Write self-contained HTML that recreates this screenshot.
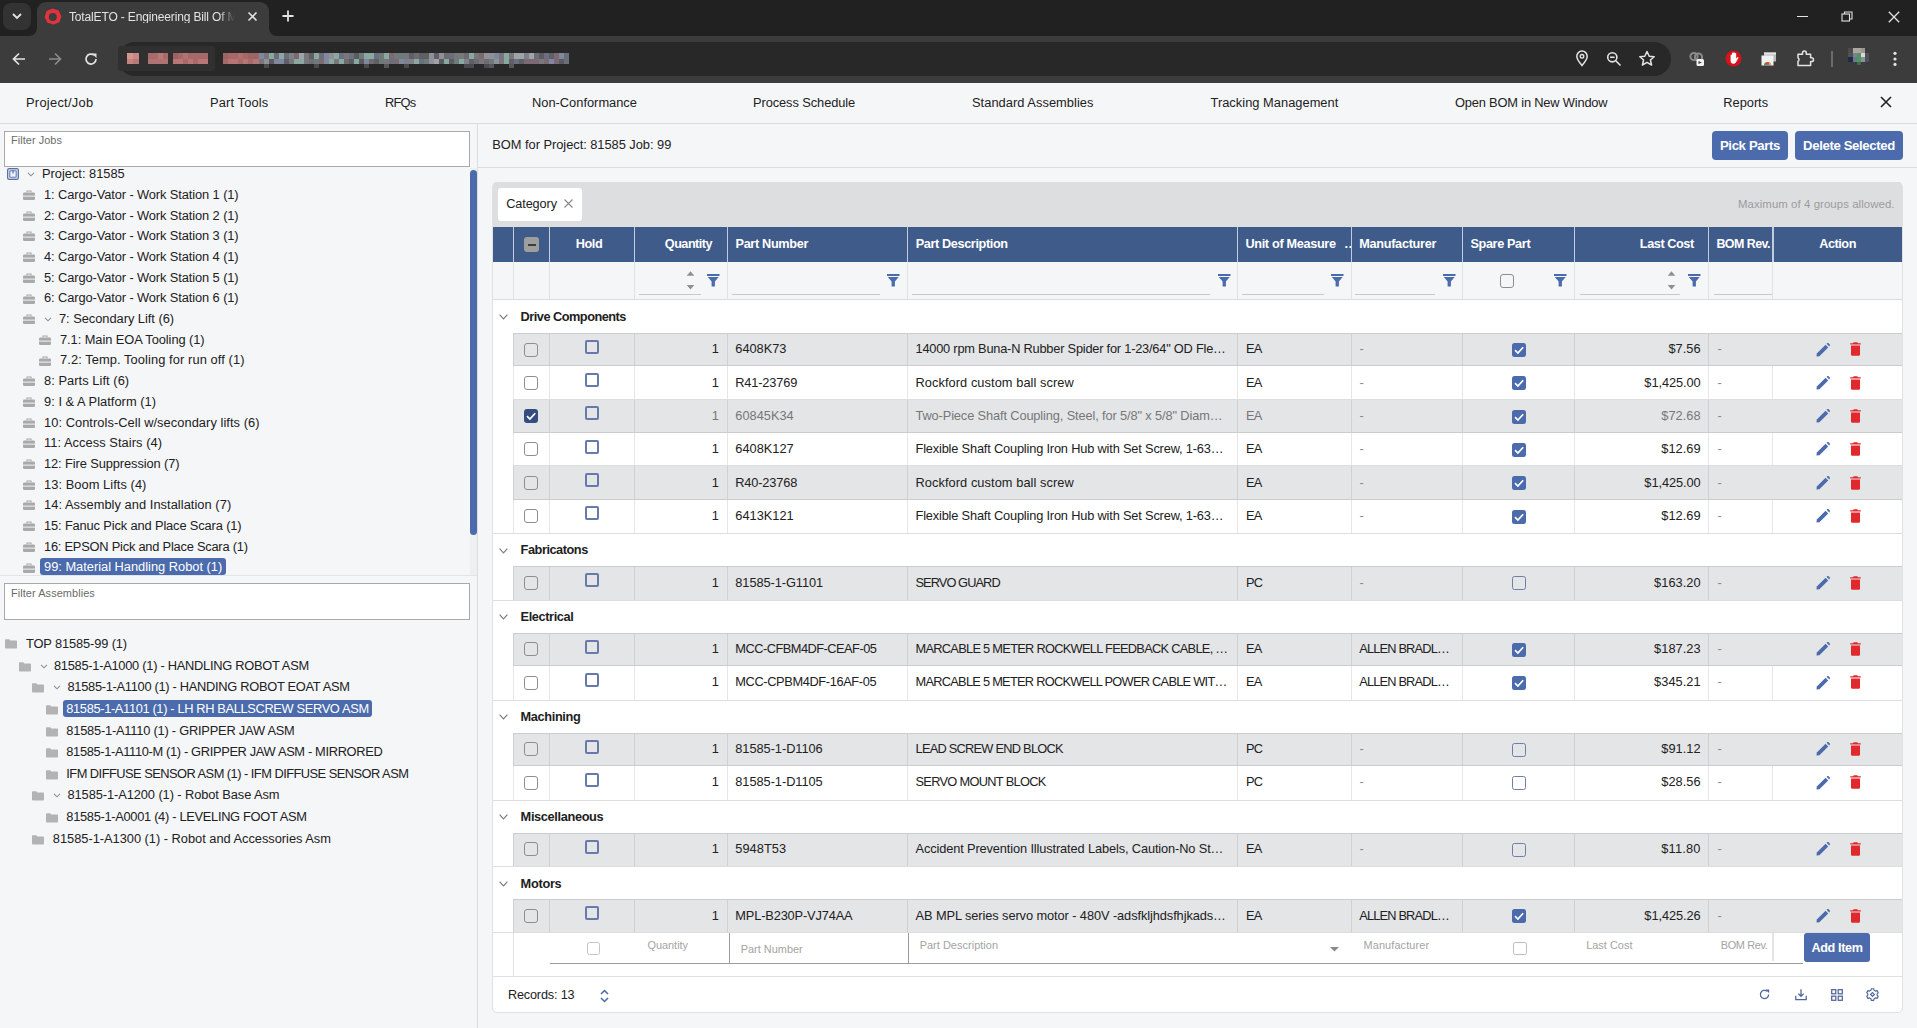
<!DOCTYPE html>
<html><head><meta charset="utf-8"><title>TotalETO</title>
<style>
*{box-sizing:border-box;margin:0;padding:0}
html,body{width:1917px;height:1028px;overflow:hidden}
body{background:#f5f6f8;font-family:"Liberation Sans",sans-serif;position:relative;color:#212121}
.a{position:absolute}
.t{position:absolute;white-space:nowrap;line-height:1}
/* chrome */
#strip{left:0;top:0;width:1917px;height:36px;background:#202120}
#toolbar{left:0;top:36px;width:1917px;height:47px;background:#3c3c3c}
#tab{left:37px;top:2px;width:232px;height:40px;background:#3c3c3c;border-radius:9px 9px 0 0}
#omni{left:118px;top:42px;width:1553px;height:34px;background:#282828;border-radius:17px}
/* nav */
#nav{left:0;top:83px;width:1917px;height:41px;background:#f5f6f8;border-bottom:1px solid #d9dadd}
.nv{font-size:13.5px;color:#212121;top:96px}
/* left */
#vdiv{left:477px;top:123px;width:1px;height:905px;background:#e0e1e4}
.inp{background:#fff;border:1px solid #a9a9a9}
.ph{font-size:11px;color:#6b6b6b}
.tr{font-size:13px;color:#212121}
.bag{width:13px;height:11px}
.fold{width:13px;height:11px}
/* right */
.btn{background:#4a6cb0;color:#fff;font-weight:bold;font-size:13px;border-radius:3px}
</style></head><body>
<!-- ===== BROWSER CHROME ===== -->
<div id="strip" class="a"></div>
<div id="toolbar" class="a"></div>
<div class="a" style="left:3px;top:3px;width:28px;height:27px;background:#333;border-radius:8px"></div>
<svg class="a" style="left:10px;top:10px" width="14" height="12" viewBox="0 0 14 12"><path d="M3 4 L7 8 L11 4" stroke="#e3e3e3" stroke-width="1.8" fill="none"/></svg>
<div id="tab" class="a"></div>
<svg class="a" style="left:29px;top:28px" width="8" height="8"><path d="M8 0 V8 H0 A8 8 0 0 0 8 0Z" fill="#3c3c3c"/></svg>
<svg class="a" style="left:269px;top:28px" width="8" height="8"><path d="M0 0 V8 H8 A8 8 0 0 1 0 0Z" fill="#3c3c3c"/></svg>
<svg class="a" style="left:44px;top:7.5px" width="18" height="17" viewBox="0 0 18 17"><path fill-rule="evenodd" fill="#e0333d" d="M8.6 0.6 L14.6 2.6 L17.4 8.2 L15.4 14.2 L9.6 16.6 L3.4 14.8 L0.6 9 L2.6 3 Z M8.8 5 A4 4 0 1 0 8.8 13 A4 4 0 1 0 8.8 5 Z"/></svg>
<div class="t" style="left:69px;top:11px;font-size:12px;letter-spacing:-0.15px;color:#e3e3e3;width:166px;overflow:hidden;-webkit-mask-image:linear-gradient(90deg,#000 150px,transparent 166px)">TotalETO - Engineering Bill Of Materials</div>
<svg class="a" style="left:247px;top:11px" width="11" height="11" viewBox="0 0 11 11"><path d="M1.5 1.5 L9.5 9.5 M9.5 1.5 L1.5 9.5" stroke="#e3e3e3" stroke-width="1.6"/></svg>
<svg class="a" style="left:282px;top:10px" width="12" height="12" viewBox="0 0 12 12"><path d="M6 0.5 V11.5 M0.5 6 H11.5" stroke="#e3e3e3" stroke-width="1.8"/></svg>
<!-- window controls -->
<div class="a" style="left:1797px;top:16px;width:11px;height:1px;background:#e3e3e3"></div>
<svg class="a" style="left:1841px;top:11px" width="13" height="11" viewBox="0 0 13 11"><rect x="1" y="3" width="7.5" height="7" fill="none" stroke="#e3e3e3" stroke-width="1.1"/><path d="M3.5 3 V1 H11 V8 H8.5" fill="none" stroke="#e3e3e3" stroke-width="1.1"/></svg>
<svg class="a" style="left:1888px;top:11px" width="12" height="12" viewBox="0 0 12 12"><path d="M0.8 0.8 L11.2 11.2 M11.2 0.8 L0.8 11.2" stroke="#e3e3e3" stroke-width="1.3"/></svg>
<!-- nav buttons -->
<svg class="a" style="left:12px;top:52px" width="14" height="14" viewBox="0 0 14 14"><path d="M13 7 H2 M7 1.5 L1.5 7 L7 12.5" stroke="#e3e3e3" stroke-width="1.7" fill="none"/></svg>
<svg class="a" style="left:48px;top:52px" width="14" height="14" viewBox="0 0 14 14"><path d="M1 7 H12 M7 1.5 L12.5 7 L7 12.5" stroke="#8a8a8a" stroke-width="1.7" fill="none"/></svg>
<svg class="a" style="left:84px;top:52px" width="14" height="14" viewBox="0 0 14 14"><path d="M12 7 A5 5 0 1 1 10.2 3.2" stroke="#e3e3e3" stroke-width="1.7" fill="none"/><path d="M8 1.5 H12.5 V6 Z" fill="#e3e3e3"/></svg>
<div id="omni" class="a"></div>
<div class="a" style="left:0;top:0;width:1917px;height:83px;filter:blur(0.5px)"><div class="a" style="left:118px;top:46px;width:97px;height:25px;background:#303030;border-radius:3px"></div><div class="a" style="left:127px;top:53px;width:6px;height:6px;background:#d29590"></div><div class="a" style="left:127px;top:59px;width:6px;height:5px;background:#c4837f"></div><div class="a" style="left:133px;top:53px;width:6px;height:6px;background:#c98a86"></div><div class="a" style="left:133px;top:59px;width:6px;height:5px;background:#b9787a"></div><div class="a" style="left:148px;top:53px;width:5px;height:6px;background:#a86a6a"></div><div class="a" style="left:148px;top:59px;width:5px;height:5px;background:#b07272"></div><div class="a" style="left:153px;top:53px;width:5px;height:6px;background:#a86a6a"></div><div class="a" style="left:153px;top:59px;width:5px;height:5px;background:#b07272"></div><div class="a" style="left:158px;top:53px;width:5px;height:6px;background:#b97a76"></div><div class="a" style="left:158px;top:59px;width:5px;height:5px;background:#b07272"></div><div class="a" style="left:163px;top:53px;width:5px;height:6px;background:#a86a6a"></div><div class="a" style="left:163px;top:59px;width:5px;height:5px;background:#b07272"></div><div class="a" style="left:173px;top:53px;width:5px;height:6px;background:#9a6262"></div><div class="a" style="left:173px;top:59px;width:5px;height:5px;background:#b87676"></div><div class="a" style="left:178px;top:53px;width:5px;height:6px;background:#a86868"></div><div class="a" style="left:178px;top:59px;width:5px;height:5px;background:#b87676"></div><div class="a" style="left:183px;top:53px;width:5px;height:6px;background:#b37272"></div><div class="a" style="left:183px;top:59px;width:5px;height:5px;background:#a66a6a"></div><div class="a" style="left:188px;top:53px;width:5px;height:6px;background:#a86868"></div><div class="a" style="left:188px;top:59px;width:5px;height:5px;background:#b87676"></div><div class="a" style="left:193px;top:53px;width:5px;height:6px;background:#a86868"></div><div class="a" style="left:193px;top:59px;width:5px;height:5px;background:#a66a6a"></div><div class="a" style="left:198px;top:53px;width:5px;height:6px;background:#a86868"></div><div class="a" style="left:198px;top:59px;width:5px;height:5px;background:#b87676"></div><div class="a" style="left:203px;top:53px;width:5px;height:6px;background:#a86868"></div><div class="a" style="left:203px;top:59px;width:5px;height:5px;background:#b87676"></div><div class="a" style="left:223px;top:53px;width:5px;height:6px;background:#9c6464"></div><div class="a" style="left:223px;top:59px;width:5px;height:5px;background:#a56a6a"></div><div class="a" style="left:228px;top:53px;width:5px;height:6px;background:#a86868"></div><div class="a" style="left:228px;top:59px;width:5px;height:5px;background:#b77474"></div><div class="a" style="left:233px;top:53px;width:5px;height:6px;background:#a86868"></div><div class="a" style="left:233px;top:59px;width:5px;height:5px;background:#b77474"></div><div class="a" style="left:238px;top:53px;width:5px;height:6px;background:#b07070"></div><div class="a" style="left:238px;top:59px;width:5px;height:5px;background:#a56a6a"></div><div class="a" style="left:243px;top:53px;width:5px;height:6px;background:#a86868"></div><div class="a" style="left:243px;top:59px;width:5px;height:5px;background:#b77474"></div><div class="a" style="left:248px;top:53px;width:5px;height:6px;background:#9c6464"></div><div class="a" style="left:248px;top:59px;width:5px;height:5px;background:#a56a6a"></div><div class="a" style="left:253px;top:53px;width:5px;height:6px;background:#9c6464"></div><div class="a" style="left:253px;top:59px;width:5px;height:5px;background:#b77474"></div><div class="a" style="left:258px;top:53px;width:5px;height:6px;background:#a86868"></div><div class="a" style="left:258px;top:59px;width:5px;height:5px;background:#b77474"></div><div class="a" style="left:259px;top:53px;width:5px;height:6px;background:#8088a0"></div><div class="a" style="left:259px;top:59px;width:5px;height:5px;background:#77777c"></div><div class="a" style="left:264px;top:53px;width:5px;height:6px;background:#77777c"></div><div class="a" style="left:264px;top:59px;width:5px;height:5px;background:#909098"></div><div class="a" style="left:264px;top:64px;width:5px;height:4px;background:#4a4a4e"></div><div class="a" style="left:269px;top:53px;width:5px;height:6px;background:#8aa8a0"></div><div class="a" style="left:269px;top:59px;width:5px;height:5px;background:#5a5c62"></div><div class="a" style="left:274px;top:53px;width:5px;height:6px;background:#6c6f7a"></div><div class="a" style="left:274px;top:59px;width:5px;height:5px;background:#8088a0"></div><div class="a" style="left:279px;top:53px;width:5px;height:6px;background:#8aa8a0"></div><div class="a" style="left:279px;top:59px;width:5px;height:5px;background:#8088a0"></div><div class="a" style="left:284px;top:53px;width:5px;height:6px;background:#6c6f7a"></div><div class="a" style="left:284px;top:59px;width:5px;height:5px;background:#5f6066"></div><div class="a" style="left:289px;top:53px;width:5px;height:6px;background:#80808a"></div><div class="a" style="left:289px;top:59px;width:5px;height:5px;background:#77777c"></div><div class="a" style="left:294px;top:53px;width:5px;height:6px;background:#7c6a72"></div><div class="a" style="left:294px;top:59px;width:5px;height:5px;background:#8aa8a0"></div><div class="a" style="left:299px;top:53px;width:5px;height:6px;background:#a0a4a8"></div><div class="a" style="left:299px;top:59px;width:5px;height:5px;background:#8aa8a0"></div><div class="a" style="left:304px;top:53px;width:5px;height:6px;background:#77777c"></div><div class="a" style="left:304px;top:59px;width:5px;height:5px;background:#77777c"></div><div class="a" style="left:309px;top:53px;width:5px;height:6px;background:#5f6066"></div><div class="a" style="left:309px;top:59px;width:5px;height:5px;background:#6c6f7a"></div><div class="a" style="left:314px;top:53px;width:5px;height:6px;background:#8aa8a0"></div><div class="a" style="left:314px;top:59px;width:5px;height:5px;background:#707a78"></div><div class="a" style="left:314px;top:64px;width:5px;height:4px;background:#4a4a4e"></div><div class="a" style="left:319px;top:53px;width:5px;height:6px;background:#6c6f7a"></div><div class="a" style="left:319px;top:59px;width:5px;height:5px;background:#7c6a72"></div><div class="a" style="left:324px;top:53px;width:5px;height:6px;background:#8088a0"></div><div class="a" style="left:324px;top:59px;width:5px;height:5px;background:#8088a0"></div><div class="a" style="left:329px;top:53px;width:5px;height:6px;background:#909098"></div><div class="a" style="left:329px;top:59px;width:5px;height:5px;background:#8aa8a0"></div><div class="a" style="left:334px;top:53px;width:5px;height:6px;background:#8aa8a0"></div><div class="a" style="left:334px;top:59px;width:5px;height:5px;background:#77777c"></div><div class="a" style="left:339px;top:53px;width:5px;height:6px;background:#6a7080"></div><div class="a" style="left:339px;top:59px;width:5px;height:5px;background:#8aa8a0"></div><div class="a" style="left:344px;top:53px;width:5px;height:6px;background:#77777c"></div><div class="a" style="left:344px;top:59px;width:5px;height:5px;background:#6b6b70"></div><div class="a" style="left:349px;top:53px;width:5px;height:6px;background:#6a7080"></div><div class="a" style="left:349px;top:59px;width:5px;height:5px;background:#5a5c62"></div><div class="a" style="left:354px;top:53px;width:5px;height:6px;background:#5a5c62"></div><div class="a" style="left:354px;top:59px;width:5px;height:5px;background:#8aa8a0"></div><div class="a" style="left:359px;top:53px;width:5px;height:6px;background:#707a78"></div><div class="a" style="left:359px;top:59px;width:5px;height:5px;background:#5a5c62"></div><div class="a" style="left:364px;top:53px;width:5px;height:6px;background:#8aa8a0"></div><div class="a" style="left:364px;top:59px;width:5px;height:5px;background:#8088a0"></div><div class="a" style="left:364px;top:64px;width:5px;height:4px;background:#4a4a4e"></div><div class="a" style="left:369px;top:53px;width:5px;height:6px;background:#8aa8a0"></div><div class="a" style="left:369px;top:59px;width:5px;height:5px;background:#6b6b70"></div><div class="a" style="left:374px;top:53px;width:5px;height:6px;background:#6a7080"></div><div class="a" style="left:374px;top:59px;width:5px;height:5px;background:#5f6066"></div><div class="a" style="left:379px;top:53px;width:5px;height:6px;background:#707a78"></div><div class="a" style="left:379px;top:59px;width:5px;height:5px;background:#707a78"></div><div class="a" style="left:384px;top:53px;width:5px;height:6px;background:#8aa8a0"></div><div class="a" style="left:384px;top:59px;width:5px;height:5px;background:#77777c"></div><div class="a" style="left:384px;top:64px;width:5px;height:4px;background:#55555a"></div><div class="a" style="left:389px;top:53px;width:5px;height:6px;background:#7c6a72"></div><div class="a" style="left:389px;top:59px;width:5px;height:5px;background:#6a7080"></div><div class="a" style="left:394px;top:53px;width:5px;height:6px;background:#707a78"></div><div class="a" style="left:394px;top:59px;width:5px;height:5px;background:#7c6a72"></div><div class="a" style="left:399px;top:53px;width:5px;height:6px;background:#707a78"></div><div class="a" style="left:399px;top:59px;width:5px;height:5px;background:#8088a0"></div><div class="a" style="left:404px;top:53px;width:5px;height:6px;background:#707a78"></div><div class="a" style="left:404px;top:59px;width:5px;height:5px;background:#80808a"></div><div class="a" style="left:404px;top:64px;width:5px;height:4px;background:#4a4a4e"></div><div class="a" style="left:409px;top:53px;width:5px;height:6px;background:#5f6066"></div><div class="a" style="left:409px;top:59px;width:5px;height:5px;background:#80808a"></div><div class="a" style="left:414px;top:53px;width:5px;height:6px;background:#6b6b70"></div><div class="a" style="left:414px;top:59px;width:5px;height:5px;background:#8aa8a0"></div><div class="a" style="left:419px;top:53px;width:5px;height:6px;background:#5f6066"></div><div class="a" style="left:419px;top:59px;width:5px;height:5px;background:#6a7080"></div><div class="a" style="left:424px;top:53px;width:5px;height:6px;background:#5f6066"></div><div class="a" style="left:424px;top:59px;width:5px;height:5px;background:#707a78"></div><div class="a" style="left:429px;top:53px;width:5px;height:6px;background:#909098"></div><div class="a" style="left:429px;top:59px;width:5px;height:5px;background:#909098"></div><div class="a" style="left:434px;top:53px;width:5px;height:6px;background:#5f6066"></div><div class="a" style="left:434px;top:59px;width:5px;height:5px;background:#a0a4a8"></div><div class="a" style="left:439px;top:53px;width:5px;height:6px;background:#909098"></div><div class="a" style="left:439px;top:59px;width:5px;height:5px;background:#5a5c62"></div><div class="a" style="left:444px;top:53px;width:5px;height:6px;background:#6b6b70"></div><div class="a" style="left:444px;top:59px;width:5px;height:5px;background:#8aa8a0"></div><div class="a" style="left:449px;top:53px;width:5px;height:6px;background:#6c6f7a"></div><div class="a" style="left:449px;top:59px;width:5px;height:5px;background:#5a5c62"></div><div class="a" style="left:454px;top:53px;width:5px;height:6px;background:#707a78"></div><div class="a" style="left:454px;top:59px;width:5px;height:5px;background:#707a78"></div><div class="a" style="left:459px;top:53px;width:5px;height:6px;background:#77777c"></div><div class="a" style="left:459px;top:59px;width:5px;height:5px;background:#8aa8a0"></div><div class="a" style="left:464px;top:53px;width:5px;height:6px;background:#6b6b70"></div><div class="a" style="left:464px;top:59px;width:5px;height:5px;background:#80808a"></div><div class="a" style="left:464px;top:64px;width:5px;height:4px;background:#4a4a4e"></div><div class="a" style="left:469px;top:53px;width:5px;height:6px;background:#8aa8a0"></div><div class="a" style="left:469px;top:59px;width:5px;height:5px;background:#5f6066"></div><div class="a" style="left:469px;top:64px;width:5px;height:4px;background:#4a4a4e"></div><div class="a" style="left:474px;top:53px;width:5px;height:6px;background:#77777c"></div><div class="a" style="left:474px;top:59px;width:5px;height:5px;background:#6b6b70"></div><div class="a" style="left:479px;top:53px;width:5px;height:6px;background:#7c6a72"></div><div class="a" style="left:479px;top:59px;width:5px;height:5px;background:#77777c"></div><div class="a" style="left:484px;top:53px;width:5px;height:6px;background:#909098"></div><div class="a" style="left:484px;top:59px;width:5px;height:5px;background:#6b6b70"></div><div class="a" style="left:484px;top:64px;width:5px;height:4px;background:#4a4a4e"></div><div class="a" style="left:489px;top:53px;width:5px;height:6px;background:#909098"></div><div class="a" style="left:489px;top:59px;width:5px;height:5px;background:#707a78"></div><div class="a" style="left:489px;top:64px;width:5px;height:4px;background:#55555a"></div><div class="a" style="left:494px;top:53px;width:5px;height:6px;background:#8088a0"></div><div class="a" style="left:494px;top:59px;width:5px;height:5px;background:#909098"></div><div class="a" style="left:499px;top:53px;width:5px;height:6px;background:#77777c"></div><div class="a" style="left:499px;top:59px;width:5px;height:5px;background:#77777c"></div><div class="a" style="left:504px;top:53px;width:5px;height:6px;background:#8aa8a0"></div><div class="a" style="left:504px;top:59px;width:5px;height:5px;background:#8aa8a0"></div><div class="a" style="left:509px;top:53px;width:5px;height:6px;background:#77777c"></div><div class="a" style="left:509px;top:59px;width:5px;height:5px;background:#5f6066"></div><div class="a" style="left:509px;top:64px;width:5px;height:4px;background:#55555a"></div><div class="a" style="left:514px;top:53px;width:5px;height:6px;background:#a0a4a8"></div><div class="a" style="left:514px;top:59px;width:5px;height:5px;background:#6a7080"></div><div class="a" style="left:519px;top:53px;width:5px;height:6px;background:#a0a4a8"></div><div class="a" style="left:519px;top:59px;width:5px;height:5px;background:#5f6066"></div><div class="a" style="left:524px;top:53px;width:5px;height:6px;background:#80808a"></div><div class="a" style="left:524px;top:59px;width:5px;height:5px;background:#7c6a72"></div><div class="a" style="left:529px;top:53px;width:5px;height:6px;background:#a0a4a8"></div><div class="a" style="left:529px;top:59px;width:5px;height:5px;background:#7c6a72"></div><div class="a" style="left:534px;top:53px;width:5px;height:6px;background:#6c6f7a"></div><div class="a" style="left:534px;top:59px;width:5px;height:5px;background:#7c6a72"></div><div class="a" style="left:539px;top:53px;width:5px;height:6px;background:#5a5c62"></div><div class="a" style="left:539px;top:59px;width:5px;height:5px;background:#77777c"></div><div class="a" style="left:544px;top:53px;width:5px;height:6px;background:#6a7080"></div><div class="a" style="left:544px;top:59px;width:5px;height:5px;background:#7c6a72"></div><div class="a" style="left:549px;top:53px;width:5px;height:6px;background:#5f6066"></div><div class="a" style="left:549px;top:59px;width:5px;height:5px;background:#8088a0"></div><div class="a" style="left:554px;top:53px;width:5px;height:6px;background:#7c6a72"></div><div class="a" style="left:554px;top:59px;width:5px;height:5px;background:#7c6a72"></div><div class="a" style="left:559px;top:53px;width:5px;height:6px;background:#8088a0"></div><div class="a" style="left:559px;top:59px;width:5px;height:5px;background:#5a5c62"></div><div class="a" style="left:564px;top:53px;width:5px;height:6px;background:#6c6f7a"></div><div class="a" style="left:564px;top:59px;width:5px;height:5px;background:#6c6f7a"></div></div>
<!-- omnibox right icons -->
<svg class="a" style="left:1575px;top:50px" width="14" height="17" viewBox="0 0 14 17"><path d="M7 15.5 C3 11 1.8 8.5 1.8 6.3 A5.2 5.2 0 0 1 12.2 6.3 C12.2 8.5 11 11 7 15.5Z" fill="none" stroke="#e3e3e3" stroke-width="1.5"/><circle cx="7" cy="6.3" r="1.8" fill="none" stroke="#e3e3e3" stroke-width="1.4"/></svg>
<svg class="a" style="left:1606px;top:51px" width="16" height="16" viewBox="0 0 16 16"><circle cx="6.3" cy="6.3" r="4.6" fill="none" stroke="#e3e3e3" stroke-width="1.6"/><path d="M4 6.3 H8.6 M9.8 9.8 L14.5 14.5" stroke="#e3e3e3" stroke-width="1.6"/></svg>
<svg class="a" style="left:1638px;top:50px" width="18" height="17" viewBox="0 0 18 17"><path d="M9 1.5 L11.2 6.2 L16.2 6.7 L12.4 10 L13.6 15 L9 12.4 L4.4 15 L5.6 10 L1.8 6.7 L6.8 6.2 Z" fill="none" stroke="#e3e3e3" stroke-width="1.5" stroke-linejoin="round"/></svg>
<!-- extensions -->
<svg class="a" style="left:1689px;top:50px" width="17" height="17" viewBox="0 0 17 17"><circle cx="5" cy="6.5" r="3.6" fill="none" stroke="#8c8c8c" stroke-width="2"/><circle cx="9.5" cy="7" r="3.6" fill="none" stroke="#8c8c8c" stroke-width="2"/><rect x="7.5" y="9" width="7.5" height="7" rx="1.5" fill="#f2f2f2"/><path d="M9.5 11 L12.8 12.5 L9.5 14 Z" fill="#3c3c3c"/></svg>
<svg class="a" style="left:1725px;top:50px" width="17" height="17" viewBox="0 0 17 17"><circle cx="8.5" cy="8.5" r="8" fill="#d4131c"/><path d="M5.6 9.5 V5.2 Q5.6 4.4 6.3 4.4 Q7 4.4 7 5.2 V3.4 Q7 2.6 7.7 2.6 Q8.4 2.6 8.4 3.4 V3 Q8.4 2.2 9.1 2.2 Q9.8 2.2 9.8 3 V3.8 Q9.8 3 10.5 3 Q11.2 3 11.2 3.8 V8.6 L12.2 7.4 Q12.8 6.8 13.3 7.3 Q13.7 7.8 13.2 8.5 L10.8 12.4 Q10 13.8 8.4 13.8 Q5.6 13.8 5.6 10.8 Z" fill="#fff"/></svg>
<svg class="a" style="left:1761px;top:52px" width="16" height="14" viewBox="0 0 16 14"><rect x="3" y="0.5" width="12" height="9" fill="#b8b8b8"/><rect x="3" y="0.5" width="12" height="2" fill="#e6e6e6"/><rect x="0.5" y="3.5" width="12" height="10" fill="#f0f0f0"/><path d="M3 13.5 A3.6 3.6 0 0 1 10.2 13.5 Z" fill="#d94336"/><path d="M4.8 13.5 A1.8 1.8 0 0 1 8.4 13.5 Z" fill="#4a88e0"/><path d="M3 13.5 A3.6 3.6 0 0 1 4.6 10.6 L5.6 12.3 Z" fill="#3ba35a"/><path d="M10.2 13.5 A3.6 3.6 0 0 0 8.6 10.6 L7.6 12.3 Z" fill="#f2c01e"/></svg>
<svg class="a" style="left:1797px;top:50px" width="18" height="17" viewBox="0 0 18 17"><path d="M1 4.3 H5.5 V3 A1.9 1.9 0 0 1 9.3 3 V4.3 H13.6 V7.8 H14.6 A1.9 1.9 0 0 1 14.6 11.6 H13.6 V15.6 H1 V11.3 A2 2 0 0 0 1 7.8 Z" fill="none" stroke="#e3e3e3" stroke-width="1.5" stroke-linejoin="round"/></svg>
<div class="a" style="left:1831px;top:51px;width:1.5px;height:16px;background:#6b6b6b"></div>
<div class="a" style="left:1848px;top:48px;width:21px;height:17px;filter:blur(0.35px)">
 <div class="a" style="left:0;top:0;width:5px;height:5px;background:#4c4c4e"></div>
 <div class="a" style="left:5px;top:0;width:4px;height:5px;background:#aba89f"></div>
 <div class="a" style="left:9px;top:0;width:4px;height:5px;background:#a9a69e"></div>
 <div class="a" style="left:13px;top:0;width:4px;height:5px;background:#9a9890"></div>
 <div class="a" style="left:0;top:5px;width:5px;height:4px;background:#4e525a"></div>
 <div class="a" style="left:5px;top:5px;width:4px;height:4px;background:#7c8288"></div>
 <div class="a" style="left:9px;top:5px;width:4px;height:4px;background:#5d8c6c"></div>
 <div class="a" style="left:13px;top:5px;width:4px;height:4px;background:#d7dbd6"></div>
 <div class="a" style="left:17px;top:5px;width:4px;height:4px;background:#4f5358"></div>
 <div class="a" style="left:0;top:9px;width:5px;height:5px;background:#1f2b45"></div>
 <div class="a" style="left:5px;top:9px;width:4px;height:5px;background:#687990"></div>
 <div class="a" style="left:9px;top:9px;width:4px;height:5px;background:#4b9a5b"></div>
 <div class="a" style="left:13px;top:9px;width:4px;height:5px;background:#8b9199"></div>
 <div class="a" style="left:17px;top:9px;width:4px;height:5px;background:#4b5162"></div>
 <div class="a" style="left:9px;top:14px;width:4px;height:3px;background:#3f6a4c"></div>
</div>
<svg class="a" style="left:1891px;top:50px" width="8" height="18" viewBox="0 0 8 18"><circle cx="4" cy="3.3" r="1.6" fill="#e3e3e3"/><circle cx="4" cy="9" r="1.6" fill="#e3e3e3"/><circle cx="4" cy="14.4" r="1.6" fill="#e3e3e3"/></svg>

<!-- ===== APP NAV ===== -->
<div id="nav" class="a"></div>
<svg class="a" style="left:1880px;top:96px" width="12" height="12" viewBox="0 0 12 12"><path d="M1 1 L11 11 M11 1 L1 11" stroke="#212121" stroke-width="1.6"/></svg>

<div class="t" style="top:97.00px;font-size:12.85px;color:#212121;left:26.00px;letter-spacing:0.284px;">Project/Job</div>
<div class="t" style="top:97.00px;font-size:12.85px;color:#212121;left:210.00px;letter-spacing:0.141px;">Part Tools</div>
<div class="t" style="top:97.00px;font-size:12.85px;color:#212121;left:385.00px;letter-spacing:-0.766px;">RFQs</div>
<div class="t" style="top:97.00px;font-size:12.85px;color:#212121;left:532.00px;">Non-Conformance</div>
<div class="t" style="top:97.00px;font-size:12.85px;color:#212121;left:753.00px;letter-spacing:-0.088px;">Process Schedule</div>
<div class="t" style="top:97.00px;font-size:12.85px;color:#212121;left:972.00px;letter-spacing:0.040px;">Standard Assemblies</div>
<div class="t" style="top:97.00px;font-size:12.85px;color:#212121;left:1210.50px;letter-spacing:0.026px;">Tracking Management</div>
<div class="t" style="top:97.00px;font-size:12.85px;color:#212121;left:1455.00px;letter-spacing:-0.178px;">Open BOM in New Window</div>
<div class="t" style="top:97.00px;font-size:12.85px;color:#212121;left:1723.30px;letter-spacing:-0.031px;">Reports</div>
<div class="a" style="left:477px;top:123px;width:1px;height:905px;background:#dcdde0"></div>
<div class="a inp" style="left:4px;top:131px;width:466px;height:36px"></div>
<div class="t" style="top:135.00px;font-size:10.9px;color:#6b6b6b;left:11.00px;letter-spacing:0.071px;">Filter Jobs</div>
<svg class="a" style="left:7px;top:168px" width="12" height="12" viewBox="0 0 12 12"><rect x="0.6" y="0.6" width="10.8" height="10.8" rx="1.6" fill="#d9e0f0" stroke="#5a6ea6" stroke-width="1.2"/><rect x="2.8" y="2.8" width="6.4" height="6.4" rx="0.8" fill="#eef1f8" stroke="#6a7db0" stroke-width="1.1"/><path d="M6 2.2 V5.4" stroke="#5a6ea6" stroke-width="1.2"/></svg>
<svg class="a" style="left:27px;top:172px" width="8" height="5" viewBox="0 0 8 5"><path d="M1 0.8 L4 3.8 L7 0.8" stroke="#8f8f8f" stroke-width="1.1" fill="none"/></svg>
<div class="t" style="top:168.00px;font-size:12.83px;color:#212121;left:42.00px;">Project: 81585</div>
<svg class="a" style="left:23px;top:190px" width="12" height="10" viewBox="0 0 12 10"><path d="M4 2.2 V1 H8 V2.2" stroke="#a9a9a9" stroke-width="1.2" fill="none"/><rect x="0" y="2.5" width="12" height="7.5" rx="1.2" fill="#a9a9a9"/><rect x="0" y="5.6" width="12" height="1" fill="#f5f6f8"/></svg>
<div class="t" style="top:188.80px;font-size:12.85px;color:#212121;left:44.00px;letter-spacing:-0.098px;">1: Cargo-Vator - Work Station 1 (1)</div>
<svg class="a" style="left:23px;top:211px" width="12" height="10" viewBox="0 0 12 10"><path d="M4 2.2 V1 H8 V2.2" stroke="#a9a9a9" stroke-width="1.2" fill="none"/><rect x="0" y="2.5" width="12" height="7.5" rx="1.2" fill="#a9a9a9"/><rect x="0" y="5.6" width="12" height="1" fill="#f5f6f8"/></svg>
<div class="t" style="top:209.50px;font-size:12.85px;color:#212121;left:44.00px;letter-spacing:-0.098px;">2: Cargo-Vator - Work Station 2 (1)</div>
<svg class="a" style="left:23px;top:231px" width="12" height="10" viewBox="0 0 12 10"><path d="M4 2.2 V1 H8 V2.2" stroke="#a9a9a9" stroke-width="1.2" fill="none"/><rect x="0" y="2.5" width="12" height="7.5" rx="1.2" fill="#a9a9a9"/><rect x="0" y="5.6" width="12" height="1" fill="#f5f6f8"/></svg>
<div class="t" style="top:230.20px;font-size:12.85px;color:#212121;left:44.00px;letter-spacing:-0.098px;">3: Cargo-Vator - Work Station 3 (1)</div>
<svg class="a" style="left:23px;top:252px" width="12" height="10" viewBox="0 0 12 10"><path d="M4 2.2 V1 H8 V2.2" stroke="#a9a9a9" stroke-width="1.2" fill="none"/><rect x="0" y="2.5" width="12" height="7.5" rx="1.2" fill="#a9a9a9"/><rect x="0" y="5.6" width="12" height="1" fill="#f5f6f8"/></svg>
<div class="t" style="top:250.90px;font-size:12.85px;color:#212121;left:44.00px;letter-spacing:-0.098px;">4: Cargo-Vator - Work Station 4 (1)</div>
<svg class="a" style="left:23px;top:273px" width="12" height="10" viewBox="0 0 12 10"><path d="M4 2.2 V1 H8 V2.2" stroke="#a9a9a9" stroke-width="1.2" fill="none"/><rect x="0" y="2.5" width="12" height="7.5" rx="1.2" fill="#a9a9a9"/><rect x="0" y="5.6" width="12" height="1" fill="#f5f6f8"/></svg>
<div class="t" style="top:271.60px;font-size:12.85px;color:#212121;left:44.00px;letter-spacing:-0.098px;">5: Cargo-Vator - Work Station 5 (1)</div>
<svg class="a" style="left:23px;top:294px" width="12" height="10" viewBox="0 0 12 10"><path d="M4 2.2 V1 H8 V2.2" stroke="#a9a9a9" stroke-width="1.2" fill="none"/><rect x="0" y="2.5" width="12" height="7.5" rx="1.2" fill="#a9a9a9"/><rect x="0" y="5.6" width="12" height="1" fill="#f5f6f8"/></svg>
<div class="t" style="top:292.30px;font-size:12.85px;color:#212121;left:44.00px;letter-spacing:-0.098px;">6: Cargo-Vator - Work Station 6 (1)</div>
<svg class="a" style="left:23px;top:314px" width="12" height="10" viewBox="0 0 12 10"><path d="M4 2.2 V1 H8 V2.2" stroke="#a9a9a9" stroke-width="1.2" fill="none"/><rect x="0" y="2.5" width="12" height="7.5" rx="1.2" fill="#a9a9a9"/><rect x="0" y="5.6" width="12" height="1" fill="#f5f6f8"/></svg>
<svg class="a" style="left:44px;top:317px" width="8" height="5" viewBox="0 0 8 5"><path d="M1 0.8 L4 3.8 L7 0.8" stroke="#8f8f8f" stroke-width="1.1" fill="none"/></svg>
<div class="t" style="top:313.00px;font-size:12.85px;color:#212121;left:59.00px;letter-spacing:-0.030px;">7: Secondary Lift (6)</div>
<svg class="a" style="left:39px;top:335px" width="12" height="10" viewBox="0 0 12 10"><path d="M4 2.2 V1 H8 V2.2" stroke="#a9a9a9" stroke-width="1.2" fill="none"/><rect x="0" y="2.5" width="12" height="7.5" rx="1.2" fill="#a9a9a9"/><rect x="0" y="5.6" width="12" height="1" fill="#f5f6f8"/></svg>
<div class="t" style="top:333.70px;font-size:12.85px;color:#212121;left:60.00px;letter-spacing:-0.062px;">7.1: Main EOA Tooling (1)</div>
<svg class="a" style="left:39px;top:356px" width="12" height="10" viewBox="0 0 12 10"><path d="M4 2.2 V1 H8 V2.2" stroke="#a9a9a9" stroke-width="1.2" fill="none"/><rect x="0" y="2.5" width="12" height="7.5" rx="1.2" fill="#a9a9a9"/><rect x="0" y="5.6" width="12" height="1" fill="#f5f6f8"/></svg>
<div class="t" style="top:354.40px;font-size:12.85px;color:#212121;left:60.00px;letter-spacing:0.093px;">7.2: Temp. Tooling for run off (1)</div>
<svg class="a" style="left:23px;top:376px" width="12" height="10" viewBox="0 0 12 10"><path d="M4 2.2 V1 H8 V2.2" stroke="#a9a9a9" stroke-width="1.2" fill="none"/><rect x="0" y="2.5" width="12" height="7.5" rx="1.2" fill="#a9a9a9"/><rect x="0" y="5.6" width="12" height="1" fill="#f5f6f8"/></svg>
<div class="t" style="top:375.10px;font-size:12.85px;color:#212121;left:44.00px;letter-spacing:0.057px;">8: Parts Lift (6)</div>
<svg class="a" style="left:23px;top:397px" width="12" height="10" viewBox="0 0 12 10"><path d="M4 2.2 V1 H8 V2.2" stroke="#a9a9a9" stroke-width="1.2" fill="none"/><rect x="0" y="2.5" width="12" height="7.5" rx="1.2" fill="#a9a9a9"/><rect x="0" y="5.6" width="12" height="1" fill="#f5f6f8"/></svg>
<div class="t" style="top:395.80px;font-size:12.85px;color:#212121;left:44.00px;letter-spacing:0.032px;">9: I &amp; A Platform (1)</div>
<svg class="a" style="left:23px;top:418px" width="12" height="10" viewBox="0 0 12 10"><path d="M4 2.2 V1 H8 V2.2" stroke="#a9a9a9" stroke-width="1.2" fill="none"/><rect x="0" y="2.5" width="12" height="7.5" rx="1.2" fill="#a9a9a9"/><rect x="0" y="5.6" width="12" height="1" fill="#f5f6f8"/></svg>
<div class="t" style="top:416.50px;font-size:12.85px;color:#212121;left:44.00px;letter-spacing:0.053px;">10: Controls-Cell w/secondary lifts (6)</div>
<svg class="a" style="left:23px;top:438px" width="12" height="10" viewBox="0 0 12 10"><path d="M4 2.2 V1 H8 V2.2" stroke="#a9a9a9" stroke-width="1.2" fill="none"/><rect x="0" y="2.5" width="12" height="7.5" rx="1.2" fill="#a9a9a9"/><rect x="0" y="5.6" width="12" height="1" fill="#f5f6f8"/></svg>
<div class="t" style="top:437.20px;font-size:12.85px;color:#212121;left:44.00px;letter-spacing:0.057px;">11: Access Stairs (4)</div>
<svg class="a" style="left:23px;top:459px" width="12" height="10" viewBox="0 0 12 10"><path d="M4 2.2 V1 H8 V2.2" stroke="#a9a9a9" stroke-width="1.2" fill="none"/><rect x="0" y="2.5" width="12" height="7.5" rx="1.2" fill="#a9a9a9"/><rect x="0" y="5.6" width="12" height="1" fill="#f5f6f8"/></svg>
<div class="t" style="top:457.90px;font-size:12.85px;color:#212121;left:44.00px;letter-spacing:-0.098px;">12: Fire Suppression (7)</div>
<svg class="a" style="left:23px;top:480px" width="12" height="10" viewBox="0 0 12 10"><path d="M4 2.2 V1 H8 V2.2" stroke="#a9a9a9" stroke-width="1.2" fill="none"/><rect x="0" y="2.5" width="12" height="7.5" rx="1.2" fill="#a9a9a9"/><rect x="0" y="5.6" width="12" height="1" fill="#f5f6f8"/></svg>
<div class="t" style="top:478.60px;font-size:12.85px;color:#212121;left:44.00px;letter-spacing:0.060px;">13: Boom Lifts (4)</div>
<svg class="a" style="left:23px;top:500px" width="12" height="10" viewBox="0 0 12 10"><path d="M4 2.2 V1 H8 V2.2" stroke="#a9a9a9" stroke-width="1.2" fill="none"/><rect x="0" y="2.5" width="12" height="7.5" rx="1.2" fill="#a9a9a9"/><rect x="0" y="5.6" width="12" height="1" fill="#f5f6f8"/></svg>
<div class="t" style="top:499.30px;font-size:12.85px;color:#212121;left:44.00px;letter-spacing:0.048px;">14: Assembly and Installation (7)</div>
<svg class="a" style="left:23px;top:521px" width="12" height="10" viewBox="0 0 12 10"><path d="M4 2.2 V1 H8 V2.2" stroke="#a9a9a9" stroke-width="1.2" fill="none"/><rect x="0" y="2.5" width="12" height="7.5" rx="1.2" fill="#a9a9a9"/><rect x="0" y="5.6" width="12" height="1" fill="#f5f6f8"/></svg>
<div class="t" style="top:520.00px;font-size:12.85px;color:#212121;left:44.00px;letter-spacing:-0.135px;">15: Fanuc Pick and Place Scara (1)</div>
<svg class="a" style="left:23px;top:542px" width="12" height="10" viewBox="0 0 12 10"><path d="M4 2.2 V1 H8 V2.2" stroke="#a9a9a9" stroke-width="1.2" fill="none"/><rect x="0" y="2.5" width="12" height="7.5" rx="1.2" fill="#a9a9a9"/><rect x="0" y="5.6" width="12" height="1" fill="#f5f6f8"/></svg>
<div class="t" style="top:540.70px;font-size:12.85px;color:#212121;left:44.00px;letter-spacing:-0.223px;">16: EPSON Pick and Place Scara (1)</div>
<svg class="a" style="left:23px;top:563px" width="12" height="10" viewBox="0 0 12 10"><path d="M4 2.2 V1 H8 V2.2" stroke="#a9a9a9" stroke-width="1.2" fill="none"/><rect x="0" y="2.5" width="12" height="7.5" rx="1.2" fill="#a9a9a9"/><rect x="0" y="5.6" width="12" height="1" fill="#f5f6f8"/></svg>
<div class="a" style="left:40px;top:558px;width:186px;height:17px;background:#4b6bac;border-radius:3px"></div>
<div class="t" style="top:561.40px;font-size:12.85px;color:#fff;left:44.00px;letter-spacing:-0.009px;">99: Material Handling Robot (1)</div>
<div class="a" style="left:470px;top:168px;width:7px;height:407px;background:#eeeff1"></div>
<div class="a" style="left:470px;top:170px;width:7px;height:365px;background:#4b6bac;border-radius:4px"></div>
<div class="a" style="left:0;top:575px;width:477px;height:1px;background:#e3e4e7"></div>
<div class="a inp" style="left:4px;top:583px;width:466px;height:37px"></div>
<div class="t" style="top:587.80px;font-size:10.95px;color:#6b6b6b;left:11.00px;letter-spacing:0.072px;">Filter Assemblies</div>
<svg class="a" style="left:5.3px;top:639px" width="12" height="10" viewBox="0 0 12 10"><path d="M0 1 Q0 0.2 0.8 0.2 H4.2 L5.4 1.4 H11.2 Q12 1.4 12 2.2 V8.8 Q12 9.6 11.2 9.6 H0.8 Q0 9.6 0 8.8 Z" fill="#b3b3b3"/></svg>
<div class="t" style="top:637.70px;font-size:12.85px;color:#212121;left:26.00px;letter-spacing:-0.131px;">TOP 81585-99 (1)</div>
<svg class="a" style="left:19.3px;top:662px" width="12" height="10" viewBox="0 0 12 10"><path d="M0 1 Q0 0.2 0.8 0.2 H4.2 L5.4 1.4 H11.2 Q12 1.4 12 2.2 V8.8 Q12 9.6 11.2 9.6 H0.8 Q0 9.6 0 8.8 Z" fill="#b3b3b3"/></svg>
<svg class="a" style="left:40px;top:664px" width="8" height="5" viewBox="0 0 8 5"><path d="M1 0.8 L4 3.8 L7 0.8" stroke="#8f8f8f" stroke-width="1.1" fill="none"/></svg>
<div class="t" style="top:660.30px;font-size:12.85px;color:#212121;left:54.00px;letter-spacing:-0.275px;">81585-1-A1000 (1) - HANDLING ROBOT ASM</div>
<svg class="a" style="left:32.3px;top:683px" width="12" height="10" viewBox="0 0 12 10"><path d="M0 1 Q0 0.2 0.8 0.2 H4.2 L5.4 1.4 H11.2 Q12 1.4 12 2.2 V8.8 Q12 9.6 11.2 9.6 H0.8 Q0 9.6 0 8.8 Z" fill="#b3b3b3"/></svg>
<svg class="a" style="left:53px;top:685px" width="8" height="5" viewBox="0 0 8 5"><path d="M1 0.8 L4 3.8 L7 0.8" stroke="#8f8f8f" stroke-width="1.1" fill="none"/></svg>
<div class="t" style="top:681.40px;font-size:12.85px;color:#212121;left:67.50px;letter-spacing:-0.297px;">81585-1-A1100 (1) - HANDING ROBOT EOAT ASM</div>
<svg class="a" style="left:46.3px;top:705px" width="12" height="10" viewBox="0 0 12 10"><path d="M0 1 Q0 0.2 0.8 0.2 H4.2 L5.4 1.4 H11.2 Q12 1.4 12 2.2 V8.8 Q12 9.6 11.2 9.6 H0.8 Q0 9.6 0 8.8 Z" fill="#b3b3b3"/></svg>
<div class="a" style="left:63px;top:700px;width:309px;height:17px;background:#4b6bac;border-radius:3px"></div>
<div class="t" style="top:703.20px;font-size:12.85px;color:#fff;left:66.30px;letter-spacing:-0.359px;">81585-1-A1101 (1) - LH RH BALLSCREW SERVO ASM</div>
<svg class="a" style="left:46.3px;top:727px" width="12" height="10" viewBox="0 0 12 10"><path d="M0 1 Q0 0.2 0.8 0.2 H4.2 L5.4 1.4 H11.2 Q12 1.4 12 2.2 V8.8 Q12 9.6 11.2 9.6 H0.8 Q0 9.6 0 8.8 Z" fill="#b3b3b3"/></svg>
<div class="t" style="top:725.10px;font-size:12.85px;color:#212121;left:66.30px;letter-spacing:-0.221px;">81585-1-A1110 (1) - GRIPPER JAW ASM</div>
<svg class="a" style="left:46.3px;top:748px" width="12" height="10" viewBox="0 0 12 10"><path d="M0 1 Q0 0.2 0.8 0.2 H4.2 L5.4 1.4 H11.2 Q12 1.4 12 2.2 V8.8 Q12 9.6 11.2 9.6 H0.8 Q0 9.6 0 8.8 Z" fill="#b3b3b3"/></svg>
<div class="t" style="top:746.10px;font-size:12.85px;color:#212121;left:66.30px;letter-spacing:-0.340px;">81585-1-A1110-M (1) - GRIPPER JAW ASM - MIRRORED</div>
<svg class="a" style="left:46.3px;top:770px" width="12" height="10" viewBox="0 0 12 10"><path d="M0 1 Q0 0.2 0.8 0.2 H4.2 L5.4 1.4 H11.2 Q12 1.4 12 2.2 V8.8 Q12 9.6 11.2 9.6 H0.8 Q0 9.6 0 8.8 Z" fill="#b3b3b3"/></svg>
<div class="t" style="top:768.30px;font-size:12.85px;color:#212121;left:66.30px;letter-spacing:-0.527px;">IFM DIFFUSE SENSOR ASM (1) - IFM DIFFUSE SENSOR ASM</div>
<svg class="a" style="left:32.3px;top:791px" width="12" height="10" viewBox="0 0 12 10"><path d="M0 1 Q0 0.2 0.8 0.2 H4.2 L5.4 1.4 H11.2 Q12 1.4 12 2.2 V8.8 Q12 9.6 11.2 9.6 H0.8 Q0 9.6 0 8.8 Z" fill="#b3b3b3"/></svg>
<svg class="a" style="left:53px;top:793px" width="8" height="5" viewBox="0 0 8 5"><path d="M1 0.8 L4 3.8 L7 0.8" stroke="#8f8f8f" stroke-width="1.1" fill="none"/></svg>
<div class="t" style="top:789.40px;font-size:12.85px;color:#212121;left:67.50px;letter-spacing:-0.088px;">81585-1-A1200 (1) - Robot Base Asm</div>
<svg class="a" style="left:46.3px;top:813px" width="12" height="10" viewBox="0 0 12 10"><path d="M0 1 Q0 0.2 0.8 0.2 H4.2 L5.4 1.4 H11.2 Q12 1.4 12 2.2 V8.8 Q12 9.6 11.2 9.6 H0.8 Q0 9.6 0 8.8 Z" fill="#b3b3b3"/></svg>
<div class="t" style="top:811.20px;font-size:12.85px;color:#212121;left:66.30px;letter-spacing:-0.305px;">81585-1-A0001 (4) - LEVELING FOOT ASM</div>
<svg class="a" style="left:32.3px;top:835px" width="12" height="10" viewBox="0 0 12 10"><path d="M0 1 Q0 0.2 0.8 0.2 H4.2 L5.4 1.4 H11.2 Q12 1.4 12 2.2 V8.8 Q12 9.6 11.2 9.6 H0.8 Q0 9.6 0 8.8 Z" fill="#b3b3b3"/></svg>
<div class="t" style="top:833.00px;font-size:12.85px;color:#212121;left:52.80px;letter-spacing:-0.023px;">81585-1-A1300 (1) - Robot and Accessories Asm</div>
<div class="a" style="left:478px;top:167px;width:1439px;height:1px;background:#dcdde0"></div>
<div class="t" style="top:138.70px;font-size:12.85px;color:#212121;left:492.30px;letter-spacing:-0.032px;">BOM for Project: 81585 Job: 99</div>
<div class="a" style="left:1712px;top:131px;width:76px;height:29px;background:#4b6bac;border-radius:4px"></div>
<div class="t" style="top:139.00px;font-size:13.13px;color:#fff;font-weight:bold;left:1450.00px;width:600px;text-align:center;letter-spacing:-0.333px;">Pick Parts</div>
<div class="a" style="left:1795px;top:131px;width:108px;height:29px;background:#4b6bac;border-radius:4px"></div>
<div class="t" style="top:139.00px;font-size:13.17px;color:#fff;font-weight:bold;left:1549.00px;width:600px;text-align:center;letter-spacing:-0.360px;">Delete Selected</div>
<div class="a" style="left:492px;top:182px;width:1411px;height:831px;background:#fff;border:1px solid #e0e1e3;border-radius:5px"></div>
<div class="a" style="left:493px;top:182px;width:1409px;height:45px;background:#dddee0;border-radius:4px 4px 0 0"></div>
<div class="a" style="left:498px;top:188px;width:84px;height:33px;background:#fff;border-radius:3px"></div>
<div class="t" style="top:197.90px;font-size:12.68px;color:#212121;left:506.20px;letter-spacing:-0.084px;">Category</div>
<svg class="a" style="left:564px;top:198.5px" width="9" height="9" viewBox="0 0 9 9"><path d="M0.5 0.5 L8.5 8.5 M8.5 0.5 L0.5 8.5" stroke="#8a8a8a" stroke-width="1.1"/></svg>
<div class="t" style="top:198.80px;font-size:11.41px;color:#9c9c9c;right:22.40px;letter-spacing:0.070px;">Maximum of 4 groups allowed.</div>
<div class="a" style="left:493px;top:227px;width:1409px;height:35px;background:#3f5b8a;"></div>
<div class="a" style="left:513px;top:227px;width:1px;height:35px;background:#c2cce0;"></div>
<div class="a" style="left:549px;top:227px;width:1px;height:35px;background:#c2cce0;"></div>
<div class="a" style="left:634px;top:227px;width:1px;height:35px;background:#c2cce0;"></div>
<div class="a" style="left:727px;top:227px;width:1px;height:35px;background:#c2cce0;"></div>
<div class="a" style="left:907px;top:227px;width:1px;height:35px;background:#c2cce0;"></div>
<div class="a" style="left:1237px;top:227px;width:1px;height:35px;background:#c2cce0;"></div>
<div class="a" style="left:1351px;top:227px;width:1px;height:35px;background:#c2cce0;"></div>
<div class="a" style="left:1462px;top:227px;width:1px;height:35px;background:#c2cce0;"></div>
<div class="a" style="left:1574px;top:227px;width:1px;height:35px;background:#c2cce0;"></div>
<div class="a" style="left:1708px;top:227px;width:1px;height:35px;background:#c2cce0;"></div>
<div class="a" style="left:1772px;top:227px;width:2px;height:35px;background:#c2cce0;"></div>
<div class="a" style="left:524px;top:237px;width:15px;height:15px;background:#9e9e9e;border-radius:3px"></div>
<div class="a" style="left:527.5px;top:243.5px;width:8px;height:2px;background:#3d3d3d;"></div>
<div class="t" style="top:238.10px;font-size:12.74px;color:#fff;font-weight:bold;left:289.00px;width:600px;text-align:center;letter-spacing:-0.402px;">Hold</div>
<div class="t" style="top:238.10px;font-size:12.61px;color:#fff;font-weight:bold;right:1204.90px;letter-spacing:-0.479px;">Quantity</div>
<div class="t" style="top:238.10px;font-size:12.7px;color:#fff;font-weight:bold;left:735.50px;letter-spacing:-0.325px;">Part Number</div>
<div class="t" style="top:238.10px;font-size:12.71px;color:#fff;font-weight:bold;left:915.70px;letter-spacing:-0.385px;">Part Description</div>
<div class="t" style="top:238.10px;font-size:12.7px;color:#fff;font-weight:bold;left:1245.40px;letter-spacing:-0.325px;">Unit of Measure</div>
<div class="t" style="top:238.10px;font-size:12.7px;color:#fff;font-weight:bold;left:1344.00px;width:7px;overflow:hidden;">…</div>
<div class="t" style="top:238.10px;font-size:12.7px;color:#fff;font-weight:bold;left:1359.20px;letter-spacing:-0.286px;">Manufacturer</div>
<div class="t" style="top:238.10px;font-size:12.7px;color:#fff;font-weight:bold;left:1470.40px;letter-spacing:-0.361px;">Spare Part</div>
<div class="t" style="top:238.10px;font-size:12.7px;color:#fff;font-weight:bold;right:223.30px;letter-spacing:-0.441px;">Last Cost</div>
<div class="t" style="top:238.10px;font-size:12.43px;color:#fff;font-weight:bold;left:1716.40px;letter-spacing:-0.521px;">BOM Rev.</div>
<div class="t" style="top:238.10px;font-size:12.7px;color:#fff;font-weight:bold;left:1537.60px;width:600px;text-align:center;letter-spacing:-0.453px;">Action</div>
<div class="a" style="left:493px;top:262px;width:1409px;height:37px;background:#f5f6f8;"></div>
<div class="a" style="left:493px;top:299px;width:1409px;height:1px;background:#dadbdd;"></div>
<div class="a" style="left:513px;top:262px;width:1px;height:37px;background:#e1e2e4;"></div>
<div class="a" style="left:549px;top:262px;width:1px;height:37px;background:#e1e2e4;"></div>
<div class="a" style="left:634px;top:262px;width:1px;height:37px;background:#e1e2e4;"></div>
<div class="a" style="left:727px;top:262px;width:1px;height:37px;background:#e1e2e4;"></div>
<div class="a" style="left:907px;top:262px;width:1px;height:37px;background:#e1e2e4;"></div>
<div class="a" style="left:1237px;top:262px;width:1px;height:37px;background:#e1e2e4;"></div>
<div class="a" style="left:1351px;top:262px;width:1px;height:37px;background:#e1e2e4;"></div>
<div class="a" style="left:1462px;top:262px;width:1px;height:37px;background:#e1e2e4;"></div>
<div class="a" style="left:1574px;top:262px;width:1px;height:37px;background:#e1e2e4;"></div>
<div class="a" style="left:1708px;top:262px;width:1px;height:37px;background:#e1e2e4;"></div>
<div class="a" style="left:1772px;top:262px;width:1px;height:37px;background:#e1e2e4;"></div>
<div class="a" style="left:639px;top:294px;width:62px;height:1px;background:#c9c9c9;"></div>
<svg class="a" style="left:685.9px;top:270.5px" width="9" height="19" viewBox="0 0 9 19"><path d="M0.7 4.8 L4.5 0.2 L8.3 4.8 Z" fill="#8f8f8f"/><path d="M0.7 14 L4.5 18.5 L8.3 14 Z" fill="#8f8f8f"/></svg>
<svg class="a" style="left:707px;top:274px" width="13" height="13" viewBox="0 0 13 13"><rect x="0" y="0" width="12.5" height="2" fill="#4b6bac"/><path d="M0.8 3 H11.7 L7.9 7.4 V12.5 H4.6 V7.4 Z" fill="#4b6bac"/></svg>
<div class="a" style="left:732px;top:294px;width:148px;height:1px;background:#c9c9c9;"></div>
<svg class="a" style="left:887px;top:274px" width="13" height="13" viewBox="0 0 13 13"><rect x="0" y="0" width="12.5" height="2" fill="#4b6bac"/><path d="M0.8 3 H11.7 L7.9 7.4 V12.5 H4.6 V7.4 Z" fill="#4b6bac"/></svg>
<div class="a" style="left:912px;top:294px;width:298px;height:1px;background:#c9c9c9;"></div>
<svg class="a" style="left:1218px;top:274px" width="13" height="13" viewBox="0 0 13 13"><rect x="0" y="0" width="12.5" height="2" fill="#4b6bac"/><path d="M0.8 3 H11.7 L7.9 7.4 V12.5 H4.6 V7.4 Z" fill="#4b6bac"/></svg>
<div class="a" style="left:1242px;top:294px;width:82px;height:1px;background:#c9c9c9;"></div>
<svg class="a" style="left:1331px;top:274px" width="13" height="13" viewBox="0 0 13 13"><rect x="0" y="0" width="12.5" height="2" fill="#4b6bac"/><path d="M0.8 3 H11.7 L7.9 7.4 V12.5 H4.6 V7.4 Z" fill="#4b6bac"/></svg>
<div class="a" style="left:1355px;top:294px;width:80px;height:1px;background:#c9c9c9;"></div>
<svg class="a" style="left:1443px;top:274px" width="13" height="13" viewBox="0 0 13 13"><rect x="0" y="0" width="12.5" height="2" fill="#4b6bac"/><path d="M0.8 3 H11.7 L7.9 7.4 V12.5 H4.6 V7.4 Z" fill="#4b6bac"/></svg>
<div class="a" style="left:1500px;top:273.5px;width:14px;height:14px;border:1.3px solid #8e8e8e;border-radius:3px;background:transparent"></div>
<svg class="a" style="left:1554px;top:274px" width="13" height="13" viewBox="0 0 13 13"><rect x="0" y="0" width="12.5" height="2" fill="#4b6bac"/><path d="M0.8 3 H11.7 L7.9 7.4 V12.5 H4.6 V7.4 Z" fill="#4b6bac"/></svg>
<div class="a" style="left:1580px;top:294px;width:100px;height:1px;background:#c9c9c9;"></div>
<svg class="a" style="left:1666.9px;top:270.5px" width="9" height="19" viewBox="0 0 9 19"><path d="M0.7 4.8 L4.5 0.2 L8.3 4.8 Z" fill="#8f8f8f"/><path d="M0.7 14 L4.5 18.5 L8.3 14 Z" fill="#8f8f8f"/></svg>
<svg class="a" style="left:1688px;top:274px" width="13" height="13" viewBox="0 0 13 13"><rect x="0" y="0" width="12.5" height="2" fill="#4b6bac"/><path d="M0.8 3 H11.7 L7.9 7.4 V12.5 H4.6 V7.4 Z" fill="#4b6bac"/></svg>
<div class="a" style="left:1714px;top:294px;width:58px;height:1px;background:#c9c9c9;"></div>
<svg class="a" style="left:498.5px;top:314.30px" width="9" height="6" viewBox="0 0 9 6"><path d="M0.6 0.6 L4.5 4.8 L8.4 0.6" stroke="#7d7d7d" stroke-width="1.2" fill="none"/></svg>
<div class="t" style="top:311.20px;font-size:12.78px;color:#212121;font-weight:bold;left:520.60px;letter-spacing:-0.509px;">Drive Components</div>
<div class="a" style="left:513px;top:334px;width:1389px;height:32px;background:#e4e5e7"></div>
<div class="a" style="left:513px;top:334px;width:1px;height:32px;background:#cfd0d2"></div>
<div class="a" style="left:549px;top:334px;width:1px;height:32px;background:#cfd0d2"></div>
<div class="a" style="left:634px;top:334px;width:1px;height:32px;background:#cfd0d2"></div>
<div class="a" style="left:727px;top:334px;width:1px;height:32px;background:#cfd0d2"></div>
<div class="a" style="left:907px;top:334px;width:1px;height:32px;background:#cfd0d2"></div>
<div class="a" style="left:1237px;top:334px;width:1px;height:32px;background:#cfd0d2"></div>
<div class="a" style="left:1351px;top:334px;width:1px;height:32px;background:#cfd0d2"></div>
<div class="a" style="left:1462px;top:334px;width:1px;height:32px;background:#cfd0d2"></div>
<div class="a" style="left:1574px;top:334px;width:1px;height:32px;background:#cfd0d2"></div>
<div class="a" style="left:1708px;top:334px;width:1px;height:32px;background:#cfd0d2"></div>
<div class="a" style="left:524px;top:343px;width:14px;height:14px;border:1.3px solid #8e8e8e;border-radius:3px;background:transparent"></div>
<div class="a" style="left:585.3px;top:340px;width:13.5px;height:13.5px;border:2px solid #687aa9;border-radius:2px;background:transparent"></div>
<div class="t" style="top:343.32px;font-size:12.8px;color:#212121;right:1198.00px;letter-spacing:0.078px;">1</div>
<div class="t" style="top:343.32px;font-size:12.8px;color:#212121;left:735.30px;letter-spacing:-0.009px;">6408K73</div>
<div class="t" style="top:343.32px;font-size:12.8px;color:#212121;left:915.50px;letter-spacing:-0.214px;">14000 rpm Buna-N Rubber Spider for 1-23/64" OD Fle…</div>
<div class="t" style="top:343.32px;font-size:12.8px;color:#212121;left:1246.00px;letter-spacing:-0.727px;">EA</div>
<div class="t" style="top:343.32px;font-size:12.8px;color:#8a8a8a;left:1359.50px;">-</div>
<svg class="a" style="left:1512px;top:343px" width="14" height="14" viewBox="0 0 14 14"><rect x="0" y="0" width="14" height="14" rx="2.5" fill="#4b6bac"/><path d="M3 7.2 L5.9 10 L11.2 4.2" stroke="#fff" stroke-width="1.7" fill="none"/></svg>
<div class="t" style="top:343.32px;font-size:12.8px;color:#212121;right:216.40px;letter-spacing:0.025px;">$7.56</div>
<div class="t" style="top:343.32px;font-size:12.8px;color:#8a8a8a;left:1717.50px;">-</div>
<svg class="a" style="left:1815.5px;top:343px" width="15" height="14" viewBox="0 0 15 14"><path d="M0.5 13.5 L0.8 10.6 L9.6 1.8 L12.2 4.4 L3.4 13.2 Z" fill="#4b6bac"/><path d="M10.6 0.8 L11.4 0.1 Q12 -0.3 12.6 0.2 L13.8 1.4 Q14.3 2 13.8 2.6 L13.2 3.4 Z" fill="#4b6bac"/></svg>
<svg class="a" style="left:1850px;top:342px" width="11" height="14" viewBox="0 0 11 14"><path d="M3.7 0.3 H7.3 L7.9 1.2 H10.8 V2.6 H0.2 V1.2 H3.1 Z" fill="#e0282d"/><path d="M1 3.6 H10 V12.4 Q10 13.7 8.7 13.7 H2.3 Q1 13.7 1 12.4 Z" fill="#e0282d"/></svg>
<div class="a" style="left:513px;top:366px;width:1389px;height:34px;background:#fff"></div>
<div class="a" style="left:513px;top:366px;width:1px;height:34px;background:#e6e7e9"></div>
<div class="a" style="left:549px;top:366px;width:1px;height:34px;background:#e6e7e9"></div>
<div class="a" style="left:634px;top:366px;width:1px;height:34px;background:#e6e7e9"></div>
<div class="a" style="left:727px;top:366px;width:1px;height:34px;background:#e6e7e9"></div>
<div class="a" style="left:907px;top:366px;width:1px;height:34px;background:#e6e7e9"></div>
<div class="a" style="left:1237px;top:366px;width:1px;height:34px;background:#e6e7e9"></div>
<div class="a" style="left:1351px;top:366px;width:1px;height:34px;background:#e6e7e9"></div>
<div class="a" style="left:1462px;top:366px;width:1px;height:34px;background:#e6e7e9"></div>
<div class="a" style="left:1574px;top:366px;width:1px;height:34px;background:#e6e7e9"></div>
<div class="a" style="left:1708px;top:366px;width:1px;height:34px;background:#e6e7e9"></div>
<div class="a" style="left:1772px;top:366px;width:1px;height:34px;background:#e6e7e9"></div>
<div class="a" style="left:524px;top:376px;width:14px;height:14px;border:1.3px solid #8e8e8e;border-radius:3px;background:transparent"></div>
<div class="a" style="left:585.3px;top:373px;width:13.5px;height:13.5px;border:2px solid #687aa9;border-radius:2px;background:transparent"></div>
<div class="t" style="top:376.63px;font-size:12.8px;color:#212121;right:1198.00px;letter-spacing:0.078px;">1</div>
<div class="t" style="top:376.63px;font-size:12.8px;color:#212121;left:735.30px;letter-spacing:-0.172px;">R41-23769</div>
<div class="t" style="top:376.63px;font-size:12.8px;color:#212121;left:915.50px;letter-spacing:0.071px;">Rockford custom ball screw</div>
<div class="t" style="top:376.63px;font-size:12.8px;color:#212121;left:1246.00px;letter-spacing:-0.727px;">EA</div>
<div class="t" style="top:376.63px;font-size:12.8px;color:#8a8a8a;left:1359.50px;">-</div>
<svg class="a" style="left:1512px;top:376px" width="14" height="14" viewBox="0 0 14 14"><rect x="0" y="0" width="14" height="14" rx="2.5" fill="#4b6bac"/><path d="M3 7.2 L5.9 10 L11.2 4.2" stroke="#fff" stroke-width="1.7" fill="none"/></svg>
<div class="t" style="top:376.63px;font-size:12.8px;color:#212121;right:216.40px;letter-spacing:-0.076px;">$1,425.00</div>
<div class="t" style="top:376.63px;font-size:12.8px;color:#8a8a8a;left:1717.50px;">-</div>
<svg class="a" style="left:1815.5px;top:376px" width="15" height="14" viewBox="0 0 15 14"><path d="M0.5 13.5 L0.8 10.6 L9.6 1.8 L12.2 4.4 L3.4 13.2 Z" fill="#4b6bac"/><path d="M10.6 0.8 L11.4 0.1 Q12 -0.3 12.6 0.2 L13.8 1.4 Q14.3 2 13.8 2.6 L13.2 3.4 Z" fill="#4b6bac"/></svg>
<svg class="a" style="left:1850px;top:376px" width="11" height="14" viewBox="0 0 11 14"><path d="M3.7 0.3 H7.3 L7.9 1.2 H10.8 V2.6 H0.2 V1.2 H3.1 Z" fill="#e0282d"/><path d="M1 3.6 H10 V12.4 Q10 13.7 8.7 13.7 H2.3 Q1 13.7 1 12.4 Z" fill="#e0282d"/></svg>
<div class="a" style="left:513px;top:400px;width:1389px;height:33px;background:#e4e5e7"></div>
<div class="a" style="left:513px;top:400px;width:1px;height:33px;background:#cfd0d2"></div>
<div class="a" style="left:549px;top:400px;width:1px;height:33px;background:#cfd0d2"></div>
<div class="a" style="left:634px;top:400px;width:1px;height:33px;background:#cfd0d2"></div>
<div class="a" style="left:727px;top:400px;width:1px;height:33px;background:#cfd0d2"></div>
<div class="a" style="left:907px;top:400px;width:1px;height:33px;background:#cfd0d2"></div>
<div class="a" style="left:1237px;top:400px;width:1px;height:33px;background:#cfd0d2"></div>
<div class="a" style="left:1351px;top:400px;width:1px;height:33px;background:#cfd0d2"></div>
<div class="a" style="left:1462px;top:400px;width:1px;height:33px;background:#cfd0d2"></div>
<div class="a" style="left:1574px;top:400px;width:1px;height:33px;background:#cfd0d2"></div>
<div class="a" style="left:1708px;top:400px;width:1px;height:33px;background:#cfd0d2"></div>
<svg class="a" style="left:524px;top:409px" width="14" height="14" viewBox="0 0 14 14"><rect x="0" y="0" width="14" height="14" rx="3" fill="#354d7e"/><path d="M3 7.2 L5.9 10 L11.2 4.2" stroke="#fff" stroke-width="1.7" fill="none"/></svg>
<div class="a" style="left:585.3px;top:406px;width:13.5px;height:13.5px;border:2px solid #687aa9;border-radius:2px;background:transparent"></div>
<div class="t" style="top:409.95px;font-size:12.8px;color:#777;right:1198.00px;letter-spacing:0.078px;">1</div>
<div class="t" style="top:409.95px;font-size:12.8px;color:#777;left:735.30px;">60845K34</div>
<div class="t" style="top:409.95px;font-size:12.8px;color:#777;left:915.50px;letter-spacing:-0.123px;">Two-Piece Shaft Coupling, Steel, for 5/8" x 5/8" Diam…</div>
<div class="t" style="top:409.95px;font-size:12.8px;color:#777;left:1246.00px;letter-spacing:-0.727px;">EA</div>
<div class="t" style="top:409.95px;font-size:12.8px;color:#8a8a8a;left:1359.50px;">-</div>
<svg class="a" style="left:1512px;top:410px" width="14" height="14" viewBox="0 0 14 14"><rect x="0" y="0" width="14" height="14" rx="2.5" fill="#4b6bac"/><path d="M3 7.2 L5.9 10 L11.2 4.2" stroke="#fff" stroke-width="1.7" fill="none"/></svg>
<div class="t" style="top:409.95px;font-size:12.8px;color:#777;right:216.40px;letter-spacing:0.034px;">$72.68</div>
<div class="t" style="top:409.95px;font-size:12.8px;color:#8a8a8a;left:1717.50px;">-</div>
<svg class="a" style="left:1815.5px;top:409px" width="15" height="14" viewBox="0 0 15 14"><path d="M0.5 13.5 L0.8 10.6 L9.6 1.8 L12.2 4.4 L3.4 13.2 Z" fill="#4b6bac"/><path d="M10.6 0.8 L11.4 0.1 Q12 -0.3 12.6 0.2 L13.8 1.4 Q14.3 2 13.8 2.6 L13.2 3.4 Z" fill="#4b6bac"/></svg>
<svg class="a" style="left:1850px;top:409px" width="11" height="14" viewBox="0 0 11 14"><path d="M3.7 0.3 H7.3 L7.9 1.2 H10.8 V2.6 H0.2 V1.2 H3.1 Z" fill="#e0282d"/><path d="M1 3.6 H10 V12.4 Q10 13.7 8.7 13.7 H2.3 Q1 13.7 1 12.4 Z" fill="#e0282d"/></svg>
<div class="a" style="left:513px;top:433px;width:1389px;height:33px;background:#fff"></div>
<div class="a" style="left:513px;top:433px;width:1px;height:33px;background:#e6e7e9"></div>
<div class="a" style="left:549px;top:433px;width:1px;height:33px;background:#e6e7e9"></div>
<div class="a" style="left:634px;top:433px;width:1px;height:33px;background:#e6e7e9"></div>
<div class="a" style="left:727px;top:433px;width:1px;height:33px;background:#e6e7e9"></div>
<div class="a" style="left:907px;top:433px;width:1px;height:33px;background:#e6e7e9"></div>
<div class="a" style="left:1237px;top:433px;width:1px;height:33px;background:#e6e7e9"></div>
<div class="a" style="left:1351px;top:433px;width:1px;height:33px;background:#e6e7e9"></div>
<div class="a" style="left:1462px;top:433px;width:1px;height:33px;background:#e6e7e9"></div>
<div class="a" style="left:1574px;top:433px;width:1px;height:33px;background:#e6e7e9"></div>
<div class="a" style="left:1708px;top:433px;width:1px;height:33px;background:#e6e7e9"></div>
<div class="a" style="left:1772px;top:433px;width:1px;height:33px;background:#e6e7e9"></div>
<div class="a" style="left:524px;top:442px;width:14px;height:14px;border:1.3px solid #8e8e8e;border-radius:3px;background:transparent"></div>
<div class="a" style="left:585.3px;top:440px;width:13.5px;height:13.5px;border:2px solid #687aa9;border-radius:2px;background:transparent"></div>
<div class="t" style="top:443.26px;font-size:12.8px;color:#212121;right:1198.00px;letter-spacing:0.078px;">1</div>
<div class="t" style="top:443.26px;font-size:12.8px;color:#212121;left:735.30px;">6408K127</div>
<div class="t" style="top:443.26px;font-size:12.8px;color:#212121;left:915.50px;letter-spacing:-0.175px;">Flexible Shaft Coupling Iron Hub with Set Screw, 1-63…</div>
<div class="t" style="top:443.26px;font-size:12.8px;color:#212121;left:1246.00px;letter-spacing:-0.727px;">EA</div>
<div class="t" style="top:443.26px;font-size:12.8px;color:#8a8a8a;left:1359.50px;">-</div>
<svg class="a" style="left:1512px;top:443px" width="14" height="14" viewBox="0 0 14 14"><rect x="0" y="0" width="14" height="14" rx="2.5" fill="#4b6bac"/><path d="M3 7.2 L5.9 10 L11.2 4.2" stroke="#fff" stroke-width="1.7" fill="none"/></svg>
<div class="t" style="top:443.26px;font-size:12.8px;color:#212121;right:216.40px;letter-spacing:0.034px;">$12.69</div>
<div class="t" style="top:443.26px;font-size:12.8px;color:#8a8a8a;left:1717.50px;">-</div>
<svg class="a" style="left:1815.5px;top:442px" width="15" height="14" viewBox="0 0 15 14"><path d="M0.5 13.5 L0.8 10.6 L9.6 1.8 L12.2 4.4 L3.4 13.2 Z" fill="#4b6bac"/><path d="M10.6 0.8 L11.4 0.1 Q12 -0.3 12.6 0.2 L13.8 1.4 Q14.3 2 13.8 2.6 L13.2 3.4 Z" fill="#4b6bac"/></svg>
<svg class="a" style="left:1850px;top:442px" width="11" height="14" viewBox="0 0 11 14"><path d="M3.7 0.3 H7.3 L7.9 1.2 H10.8 V2.6 H0.2 V1.2 H3.1 Z" fill="#e0282d"/><path d="M1 3.6 H10 V12.4 Q10 13.7 8.7 13.7 H2.3 Q1 13.7 1 12.4 Z" fill="#e0282d"/></svg>
<div class="a" style="left:513px;top:466px;width:1389px;height:34px;background:#e4e5e7"></div>
<div class="a" style="left:513px;top:466px;width:1px;height:34px;background:#cfd0d2"></div>
<div class="a" style="left:549px;top:466px;width:1px;height:34px;background:#cfd0d2"></div>
<div class="a" style="left:634px;top:466px;width:1px;height:34px;background:#cfd0d2"></div>
<div class="a" style="left:727px;top:466px;width:1px;height:34px;background:#cfd0d2"></div>
<div class="a" style="left:907px;top:466px;width:1px;height:34px;background:#cfd0d2"></div>
<div class="a" style="left:1237px;top:466px;width:1px;height:34px;background:#cfd0d2"></div>
<div class="a" style="left:1351px;top:466px;width:1px;height:34px;background:#cfd0d2"></div>
<div class="a" style="left:1462px;top:466px;width:1px;height:34px;background:#cfd0d2"></div>
<div class="a" style="left:1574px;top:466px;width:1px;height:34px;background:#cfd0d2"></div>
<div class="a" style="left:1708px;top:466px;width:1px;height:34px;background:#cfd0d2"></div>
<div class="a" style="left:524px;top:476px;width:14px;height:14px;border:1.3px solid #8e8e8e;border-radius:3px;background:transparent"></div>
<div class="a" style="left:585.3px;top:473px;width:13.5px;height:13.5px;border:2px solid #687aa9;border-radius:2px;background:transparent"></div>
<div class="t" style="top:476.58px;font-size:12.8px;color:#212121;right:1198.00px;letter-spacing:0.078px;">1</div>
<div class="t" style="top:476.58px;font-size:12.8px;color:#212121;left:735.30px;letter-spacing:-0.172px;">R40-23768</div>
<div class="t" style="top:476.58px;font-size:12.8px;color:#212121;left:915.50px;letter-spacing:0.071px;">Rockford custom ball screw</div>
<div class="t" style="top:476.58px;font-size:12.8px;color:#212121;left:1246.00px;letter-spacing:-0.727px;">EA</div>
<div class="t" style="top:476.58px;font-size:12.8px;color:#8a8a8a;left:1359.50px;">-</div>
<svg class="a" style="left:1512px;top:476px" width="14" height="14" viewBox="0 0 14 14"><rect x="0" y="0" width="14" height="14" rx="2.5" fill="#4b6bac"/><path d="M3 7.2 L5.9 10 L11.2 4.2" stroke="#fff" stroke-width="1.7" fill="none"/></svg>
<div class="t" style="top:476.58px;font-size:12.8px;color:#212121;right:216.40px;letter-spacing:-0.076px;">$1,425.00</div>
<div class="t" style="top:476.58px;font-size:12.8px;color:#8a8a8a;left:1717.50px;">-</div>
<svg class="a" style="left:1815.5px;top:476px" width="15" height="14" viewBox="0 0 15 14"><path d="M0.5 13.5 L0.8 10.6 L9.6 1.8 L12.2 4.4 L3.4 13.2 Z" fill="#4b6bac"/><path d="M10.6 0.8 L11.4 0.1 Q12 -0.3 12.6 0.2 L13.8 1.4 Q14.3 2 13.8 2.6 L13.2 3.4 Z" fill="#4b6bac"/></svg>
<svg class="a" style="left:1850px;top:476px" width="11" height="14" viewBox="0 0 11 14"><path d="M3.7 0.3 H7.3 L7.9 1.2 H10.8 V2.6 H0.2 V1.2 H3.1 Z" fill="#e0282d"/><path d="M1 3.6 H10 V12.4 Q10 13.7 8.7 13.7 H2.3 Q1 13.7 1 12.4 Z" fill="#e0282d"/></svg>
<div class="a" style="left:513px;top:500px;width:1389px;height:34px;background:#fff"></div>
<div class="a" style="left:513px;top:500px;width:1px;height:34px;background:#e6e7e9"></div>
<div class="a" style="left:549px;top:500px;width:1px;height:34px;background:#e6e7e9"></div>
<div class="a" style="left:634px;top:500px;width:1px;height:34px;background:#e6e7e9"></div>
<div class="a" style="left:727px;top:500px;width:1px;height:34px;background:#e6e7e9"></div>
<div class="a" style="left:907px;top:500px;width:1px;height:34px;background:#e6e7e9"></div>
<div class="a" style="left:1237px;top:500px;width:1px;height:34px;background:#e6e7e9"></div>
<div class="a" style="left:1351px;top:500px;width:1px;height:34px;background:#e6e7e9"></div>
<div class="a" style="left:1462px;top:500px;width:1px;height:34px;background:#e6e7e9"></div>
<div class="a" style="left:1574px;top:500px;width:1px;height:34px;background:#e6e7e9"></div>
<div class="a" style="left:1708px;top:500px;width:1px;height:34px;background:#e6e7e9"></div>
<div class="a" style="left:1772px;top:500px;width:1px;height:34px;background:#e6e7e9"></div>
<div class="a" style="left:524px;top:509px;width:14px;height:14px;border:1.3px solid #8e8e8e;border-radius:3px;background:transparent"></div>
<div class="a" style="left:585.3px;top:506px;width:13.5px;height:13.5px;border:2px solid #687aa9;border-radius:2px;background:transparent"></div>
<div class="t" style="top:509.90px;font-size:12.8px;color:#212121;right:1198.00px;letter-spacing:0.078px;">1</div>
<div class="t" style="top:509.90px;font-size:12.8px;color:#212121;left:735.30px;">6413K121</div>
<div class="t" style="top:509.90px;font-size:12.8px;color:#212121;left:915.50px;letter-spacing:-0.175px;">Flexible Shaft Coupling Iron Hub with Set Screw, 1-63…</div>
<div class="t" style="top:509.90px;font-size:12.8px;color:#212121;left:1246.00px;letter-spacing:-0.727px;">EA</div>
<div class="t" style="top:509.90px;font-size:12.8px;color:#8a8a8a;left:1359.50px;">-</div>
<svg class="a" style="left:1512px;top:510px" width="14" height="14" viewBox="0 0 14 14"><rect x="0" y="0" width="14" height="14" rx="2.5" fill="#4b6bac"/><path d="M3 7.2 L5.9 10 L11.2 4.2" stroke="#fff" stroke-width="1.7" fill="none"/></svg>
<div class="t" style="top:509.90px;font-size:12.8px;color:#212121;right:216.40px;letter-spacing:0.034px;">$12.69</div>
<div class="t" style="top:509.90px;font-size:12.8px;color:#8a8a8a;left:1717.50px;">-</div>
<svg class="a" style="left:1815.5px;top:509px" width="15" height="14" viewBox="0 0 15 14"><path d="M0.5 13.5 L0.8 10.6 L9.6 1.8 L12.2 4.4 L3.4 13.2 Z" fill="#4b6bac"/><path d="M10.6 0.8 L11.4 0.1 Q12 -0.3 12.6 0.2 L13.8 1.4 Q14.3 2 13.8 2.6 L13.2 3.4 Z" fill="#4b6bac"/></svg>
<svg class="a" style="left:1850px;top:509px" width="11" height="14" viewBox="0 0 11 14"><path d="M3.7 0.3 H7.3 L7.9 1.2 H10.8 V2.6 H0.2 V1.2 H3.1 Z" fill="#e0282d"/><path d="M1 3.6 H10 V12.4 Q10 13.7 8.7 13.7 H2.3 Q1 13.7 1 12.4 Z" fill="#e0282d"/></svg>
<svg class="a" style="left:498.5px;top:547.51px" width="9" height="6" viewBox="0 0 9 6"><path d="M0.6 0.6 L4.5 4.8 L8.4 0.6" stroke="#7d7d7d" stroke-width="1.2" fill="none"/></svg>
<div class="t" style="top:544.41px;font-size:12.78px;color:#212121;font-weight:bold;left:520.60px;letter-spacing:-0.467px;">Fabricatons</div>
<div class="a" style="left:513px;top:567px;width:1389px;height:34px;background:#e4e5e7"></div>
<div class="a" style="left:513px;top:567px;width:1px;height:34px;background:#cfd0d2"></div>
<div class="a" style="left:549px;top:567px;width:1px;height:34px;background:#cfd0d2"></div>
<div class="a" style="left:634px;top:567px;width:1px;height:34px;background:#cfd0d2"></div>
<div class="a" style="left:727px;top:567px;width:1px;height:34px;background:#cfd0d2"></div>
<div class="a" style="left:907px;top:567px;width:1px;height:34px;background:#cfd0d2"></div>
<div class="a" style="left:1237px;top:567px;width:1px;height:34px;background:#cfd0d2"></div>
<div class="a" style="left:1351px;top:567px;width:1px;height:34px;background:#cfd0d2"></div>
<div class="a" style="left:1462px;top:567px;width:1px;height:34px;background:#cfd0d2"></div>
<div class="a" style="left:1574px;top:567px;width:1px;height:34px;background:#cfd0d2"></div>
<div class="a" style="left:1708px;top:567px;width:1px;height:34px;background:#cfd0d2"></div>
<div class="a" style="left:524px;top:576px;width:14px;height:14px;border:1.3px solid #8e8e8e;border-radius:3px;background:transparent"></div>
<div class="a" style="left:585.3px;top:573px;width:13.5px;height:13.5px;border:2px solid #687aa9;border-radius:2px;background:transparent"></div>
<div class="t" style="top:576.53px;font-size:12.8px;color:#212121;right:1198.00px;letter-spacing:0.078px;">1</div>
<div class="t" style="top:576.53px;font-size:12.8px;color:#212121;left:735.30px;letter-spacing:-0.076px;">81585-1-G1101</div>
<div class="t" style="top:576.53px;font-size:12.8px;color:#212121;left:915.50px;letter-spacing:-0.922px;">SERVO GUARD</div>
<div class="t" style="top:576.53px;font-size:12.8px;color:#212121;left:1246.00px;letter-spacing:-0.688px;">PC</div>
<div class="t" style="top:576.53px;font-size:12.8px;color:#8a8a8a;left:1359.50px;">-</div>
<div class="a" style="left:1512px;top:576px;width:14px;height:14px;border:1.5px solid #6e7ea6;border-radius:2.5px;background:transparent"></div>
<div class="t" style="top:576.53px;font-size:12.8px;color:#212121;right:216.40px;letter-spacing:0.038px;">$163.20</div>
<div class="t" style="top:576.53px;font-size:12.8px;color:#8a8a8a;left:1717.50px;">-</div>
<svg class="a" style="left:1815.5px;top:576px" width="15" height="14" viewBox="0 0 15 14"><path d="M0.5 13.5 L0.8 10.6 L9.6 1.8 L12.2 4.4 L3.4 13.2 Z" fill="#4b6bac"/><path d="M10.6 0.8 L11.4 0.1 Q12 -0.3 12.6 0.2 L13.8 1.4 Q14.3 2 13.8 2.6 L13.2 3.4 Z" fill="#4b6bac"/></svg>
<svg class="a" style="left:1850px;top:576px" width="11" height="14" viewBox="0 0 11 14"><path d="M3.7 0.3 H7.3 L7.9 1.2 H10.8 V2.6 H0.2 V1.2 H3.1 Z" fill="#e0282d"/><path d="M1 3.6 H10 V12.4 Q10 13.7 8.7 13.7 H2.3 Q1 13.7 1 12.4 Z" fill="#e0282d"/></svg>
<svg class="a" style="left:498.5px;top:614.14px" width="9" height="6" viewBox="0 0 9 6"><path d="M0.6 0.6 L4.5 4.8 L8.4 0.6" stroke="#7d7d7d" stroke-width="1.2" fill="none"/></svg>
<div class="t" style="top:611.04px;font-size:12.78px;color:#212121;font-weight:bold;left:520.60px;letter-spacing:-0.398px;">Electrical</div>
<div class="a" style="left:513px;top:634px;width:1389px;height:32px;background:#e4e5e7"></div>
<div class="a" style="left:513px;top:634px;width:1px;height:32px;background:#cfd0d2"></div>
<div class="a" style="left:549px;top:634px;width:1px;height:32px;background:#cfd0d2"></div>
<div class="a" style="left:634px;top:634px;width:1px;height:32px;background:#cfd0d2"></div>
<div class="a" style="left:727px;top:634px;width:1px;height:32px;background:#cfd0d2"></div>
<div class="a" style="left:907px;top:634px;width:1px;height:32px;background:#cfd0d2"></div>
<div class="a" style="left:1237px;top:634px;width:1px;height:32px;background:#cfd0d2"></div>
<div class="a" style="left:1351px;top:634px;width:1px;height:32px;background:#cfd0d2"></div>
<div class="a" style="left:1462px;top:634px;width:1px;height:32px;background:#cfd0d2"></div>
<div class="a" style="left:1574px;top:634px;width:1px;height:32px;background:#cfd0d2"></div>
<div class="a" style="left:1708px;top:634px;width:1px;height:32px;background:#cfd0d2"></div>
<div class="a" style="left:524px;top:642px;width:14px;height:14px;border:1.3px solid #8e8e8e;border-radius:3px;background:transparent"></div>
<div class="a" style="left:585.3px;top:640px;width:13.5px;height:13.5px;border:2px solid #687aa9;border-radius:2px;background:transparent"></div>
<div class="t" style="top:643.16px;font-size:12.8px;color:#212121;right:1198.00px;letter-spacing:0.078px;">1</div>
<div class="t" style="top:643.16px;font-size:12.8px;color:#212121;left:735.30px;letter-spacing:-0.509px;">MCC-CFBM4DF-CEAF-05</div>
<div class="t" style="top:643.16px;font-size:12.8px;color:#212121;left:915.50px;letter-spacing:-0.706px;">MARCABLE 5 METER ROCKWELL FEEDBACK CABLE, …</div>
<div class="t" style="top:643.16px;font-size:12.8px;color:#212121;left:1246.00px;letter-spacing:-0.727px;">EA</div>
<div class="t" style="top:643.16px;font-size:12.8px;color:#212121;left:1359.20px;letter-spacing:-0.818px;">ALLEN BRADL…</div>
<svg class="a" style="left:1512px;top:643px" width="14" height="14" viewBox="0 0 14 14"><rect x="0" y="0" width="14" height="14" rx="2.5" fill="#4b6bac"/><path d="M3 7.2 L5.9 10 L11.2 4.2" stroke="#fff" stroke-width="1.7" fill="none"/></svg>
<div class="t" style="top:643.16px;font-size:12.8px;color:#212121;right:216.40px;letter-spacing:0.038px;">$187.23</div>
<div class="t" style="top:643.16px;font-size:12.8px;color:#8a8a8a;left:1717.50px;">-</div>
<svg class="a" style="left:1815.5px;top:642px" width="15" height="14" viewBox="0 0 15 14"><path d="M0.5 13.5 L0.8 10.6 L9.6 1.8 L12.2 4.4 L3.4 13.2 Z" fill="#4b6bac"/><path d="M10.6 0.8 L11.4 0.1 Q12 -0.3 12.6 0.2 L13.8 1.4 Q14.3 2 13.8 2.6 L13.2 3.4 Z" fill="#4b6bac"/></svg>
<svg class="a" style="left:1850px;top:642px" width="11" height="14" viewBox="0 0 11 14"><path d="M3.7 0.3 H7.3 L7.9 1.2 H10.8 V2.6 H0.2 V1.2 H3.1 Z" fill="#e0282d"/><path d="M1 3.6 H10 V12.4 Q10 13.7 8.7 13.7 H2.3 Q1 13.7 1 12.4 Z" fill="#e0282d"/></svg>
<div class="a" style="left:513px;top:666px;width:1389px;height:35px;background:#fff"></div>
<div class="a" style="left:513px;top:666px;width:1px;height:35px;background:#e6e7e9"></div>
<div class="a" style="left:549px;top:666px;width:1px;height:35px;background:#e6e7e9"></div>
<div class="a" style="left:634px;top:666px;width:1px;height:35px;background:#e6e7e9"></div>
<div class="a" style="left:727px;top:666px;width:1px;height:35px;background:#e6e7e9"></div>
<div class="a" style="left:907px;top:666px;width:1px;height:35px;background:#e6e7e9"></div>
<div class="a" style="left:1237px;top:666px;width:1px;height:35px;background:#e6e7e9"></div>
<div class="a" style="left:1351px;top:666px;width:1px;height:35px;background:#e6e7e9"></div>
<div class="a" style="left:1462px;top:666px;width:1px;height:35px;background:#e6e7e9"></div>
<div class="a" style="left:1574px;top:666px;width:1px;height:35px;background:#e6e7e9"></div>
<div class="a" style="left:1708px;top:666px;width:1px;height:35px;background:#e6e7e9"></div>
<div class="a" style="left:1772px;top:666px;width:1px;height:35px;background:#e6e7e9"></div>
<div class="a" style="left:524px;top:676px;width:14px;height:14px;border:1.3px solid #8e8e8e;border-radius:3px;background:transparent"></div>
<div class="a" style="left:585.3px;top:673px;width:13.5px;height:13.5px;border:2px solid #687aa9;border-radius:2px;background:transparent"></div>
<div class="t" style="top:676.48px;font-size:12.8px;color:#212121;right:1198.00px;letter-spacing:0.078px;">1</div>
<div class="t" style="top:676.48px;font-size:12.8px;color:#212121;left:735.30px;letter-spacing:-0.372px;">MCC-CPBM4DF-16AF-05</div>
<div class="t" style="top:676.48px;font-size:12.8px;color:#212121;left:915.50px;letter-spacing:-0.725px;">MARCABLE 5 METER ROCKWELL POWER CABLE WIT…</div>
<div class="t" style="top:676.48px;font-size:12.8px;color:#212121;left:1246.00px;letter-spacing:-0.727px;">EA</div>
<div class="t" style="top:676.48px;font-size:12.8px;color:#212121;left:1359.20px;letter-spacing:-0.818px;">ALLEN BRADL…</div>
<svg class="a" style="left:1512px;top:676px" width="14" height="14" viewBox="0 0 14 14"><rect x="0" y="0" width="14" height="14" rx="2.5" fill="#4b6bac"/><path d="M3 7.2 L5.9 10 L11.2 4.2" stroke="#fff" stroke-width="1.7" fill="none"/></svg>
<div class="t" style="top:676.48px;font-size:12.8px;color:#212121;right:216.40px;letter-spacing:0.038px;">$345.21</div>
<div class="t" style="top:676.48px;font-size:12.8px;color:#8a8a8a;left:1717.50px;">-</div>
<svg class="a" style="left:1815.5px;top:676px" width="15" height="14" viewBox="0 0 15 14"><path d="M0.5 13.5 L0.8 10.6 L9.6 1.8 L12.2 4.4 L3.4 13.2 Z" fill="#4b6bac"/><path d="M10.6 0.8 L11.4 0.1 Q12 -0.3 12.6 0.2 L13.8 1.4 Q14.3 2 13.8 2.6 L13.2 3.4 Z" fill="#4b6bac"/></svg>
<svg class="a" style="left:1850px;top:675px" width="11" height="14" viewBox="0 0 11 14"><path d="M3.7 0.3 H7.3 L7.9 1.2 H10.8 V2.6 H0.2 V1.2 H3.1 Z" fill="#e0282d"/><path d="M1 3.6 H10 V12.4 Q10 13.7 8.7 13.7 H2.3 Q1 13.7 1 12.4 Z" fill="#e0282d"/></svg>
<svg class="a" style="left:498.5px;top:714.09px" width="9" height="6" viewBox="0 0 9 6"><path d="M0.6 0.6 L4.5 4.8 L8.4 0.6" stroke="#7d7d7d" stroke-width="1.2" fill="none"/></svg>
<div class="t" style="top:710.99px;font-size:12.78px;color:#212121;font-weight:bold;left:520.60px;letter-spacing:-0.373px;">Machining</div>
<div class="a" style="left:513px;top:734px;width:1389px;height:32px;background:#e4e5e7"></div>
<div class="a" style="left:513px;top:734px;width:1px;height:32px;background:#cfd0d2"></div>
<div class="a" style="left:549px;top:734px;width:1px;height:32px;background:#cfd0d2"></div>
<div class="a" style="left:634px;top:734px;width:1px;height:32px;background:#cfd0d2"></div>
<div class="a" style="left:727px;top:734px;width:1px;height:32px;background:#cfd0d2"></div>
<div class="a" style="left:907px;top:734px;width:1px;height:32px;background:#cfd0d2"></div>
<div class="a" style="left:1237px;top:734px;width:1px;height:32px;background:#cfd0d2"></div>
<div class="a" style="left:1351px;top:734px;width:1px;height:32px;background:#cfd0d2"></div>
<div class="a" style="left:1462px;top:734px;width:1px;height:32px;background:#cfd0d2"></div>
<div class="a" style="left:1574px;top:734px;width:1px;height:32px;background:#cfd0d2"></div>
<div class="a" style="left:1708px;top:734px;width:1px;height:32px;background:#cfd0d2"></div>
<div class="a" style="left:524px;top:742px;width:14px;height:14px;border:1.3px solid #8e8e8e;border-radius:3px;background:transparent"></div>
<div class="a" style="left:585.3px;top:740px;width:13.5px;height:13.5px;border:2px solid #687aa9;border-radius:2px;background:transparent"></div>
<div class="t" style="top:743.11px;font-size:12.8px;color:#212121;right:1198.00px;letter-spacing:0.078px;">1</div>
<div class="t" style="top:743.11px;font-size:12.8px;color:#212121;left:735.30px;letter-spacing:-0.046px;">81585-1-D1106</div>
<div class="t" style="top:743.11px;font-size:12.8px;color:#212121;left:915.50px;letter-spacing:-0.742px;">LEAD SCREW END BLOCK</div>
<div class="t" style="top:743.11px;font-size:12.8px;color:#212121;left:1246.00px;letter-spacing:-0.688px;">PC</div>
<div class="t" style="top:743.11px;font-size:12.8px;color:#8a8a8a;left:1359.50px;">-</div>
<div class="a" style="left:1512px;top:743px;width:14px;height:14px;border:1.5px solid #6e7ea6;border-radius:2.5px;background:transparent"></div>
<div class="t" style="top:743.11px;font-size:12.8px;color:#212121;right:216.40px;letter-spacing:0.034px;">$91.12</div>
<div class="t" style="top:743.11px;font-size:12.8px;color:#8a8a8a;left:1717.50px;">-</div>
<svg class="a" style="left:1815.5px;top:742px" width="15" height="14" viewBox="0 0 15 14"><path d="M0.5 13.5 L0.8 10.6 L9.6 1.8 L12.2 4.4 L3.4 13.2 Z" fill="#4b6bac"/><path d="M10.6 0.8 L11.4 0.1 Q12 -0.3 12.6 0.2 L13.8 1.4 Q14.3 2 13.8 2.6 L13.2 3.4 Z" fill="#4b6bac"/></svg>
<svg class="a" style="left:1850px;top:742px" width="11" height="14" viewBox="0 0 11 14"><path d="M3.7 0.3 H7.3 L7.9 1.2 H10.8 V2.6 H0.2 V1.2 H3.1 Z" fill="#e0282d"/><path d="M1 3.6 H10 V12.4 Q10 13.7 8.7 13.7 H2.3 Q1 13.7 1 12.4 Z" fill="#e0282d"/></svg>
<div class="a" style="left:513px;top:766px;width:1389px;height:35px;background:#fff"></div>
<div class="a" style="left:513px;top:766px;width:1px;height:35px;background:#e6e7e9"></div>
<div class="a" style="left:549px;top:766px;width:1px;height:35px;background:#e6e7e9"></div>
<div class="a" style="left:634px;top:766px;width:1px;height:35px;background:#e6e7e9"></div>
<div class="a" style="left:727px;top:766px;width:1px;height:35px;background:#e6e7e9"></div>
<div class="a" style="left:907px;top:766px;width:1px;height:35px;background:#e6e7e9"></div>
<div class="a" style="left:1237px;top:766px;width:1px;height:35px;background:#e6e7e9"></div>
<div class="a" style="left:1351px;top:766px;width:1px;height:35px;background:#e6e7e9"></div>
<div class="a" style="left:1462px;top:766px;width:1px;height:35px;background:#e6e7e9"></div>
<div class="a" style="left:1574px;top:766px;width:1px;height:35px;background:#e6e7e9"></div>
<div class="a" style="left:1708px;top:766px;width:1px;height:35px;background:#e6e7e9"></div>
<div class="a" style="left:1772px;top:766px;width:1px;height:35px;background:#e6e7e9"></div>
<div class="a" style="left:524px;top:776px;width:14px;height:14px;border:1.3px solid #8e8e8e;border-radius:3px;background:transparent"></div>
<div class="a" style="left:585.3px;top:773px;width:13.5px;height:13.5px;border:2px solid #687aa9;border-radius:2px;background:transparent"></div>
<div class="t" style="top:776.42px;font-size:12.8px;color:#212121;right:1198.00px;letter-spacing:0.078px;">1</div>
<div class="t" style="top:776.42px;font-size:12.8px;color:#212121;left:735.30px;letter-spacing:-0.046px;">81585-1-D1105</div>
<div class="t" style="top:776.42px;font-size:12.8px;color:#212121;left:915.50px;letter-spacing:-0.686px;">SERVO MOUNT BLOCK</div>
<div class="t" style="top:776.42px;font-size:12.8px;color:#212121;left:1246.00px;letter-spacing:-0.688px;">PC</div>
<div class="t" style="top:776.42px;font-size:12.8px;color:#8a8a8a;left:1359.50px;">-</div>
<div class="a" style="left:1512px;top:776px;width:14px;height:14px;border:1.5px solid #6e7ea6;border-radius:2.5px;background:transparent"></div>
<div class="t" style="top:776.42px;font-size:12.8px;color:#212121;right:216.40px;letter-spacing:0.034px;">$28.56</div>
<div class="t" style="top:776.42px;font-size:12.8px;color:#8a8a8a;left:1717.50px;">-</div>
<svg class="a" style="left:1815.5px;top:776px" width="15" height="14" viewBox="0 0 15 14"><path d="M0.5 13.5 L0.8 10.6 L9.6 1.8 L12.2 4.4 L3.4 13.2 Z" fill="#4b6bac"/><path d="M10.6 0.8 L11.4 0.1 Q12 -0.3 12.6 0.2 L13.8 1.4 Q14.3 2 13.8 2.6 L13.2 3.4 Z" fill="#4b6bac"/></svg>
<svg class="a" style="left:1850px;top:775px" width="11" height="14" viewBox="0 0 11 14"><path d="M3.7 0.3 H7.3 L7.9 1.2 H10.8 V2.6 H0.2 V1.2 H3.1 Z" fill="#e0282d"/><path d="M1 3.6 H10 V12.4 Q10 13.7 8.7 13.7 H2.3 Q1 13.7 1 12.4 Z" fill="#e0282d"/></svg>
<svg class="a" style="left:498.5px;top:814.04px" width="9" height="6" viewBox="0 0 9 6"><path d="M0.6 0.6 L4.5 4.8 L8.4 0.6" stroke="#7d7d7d" stroke-width="1.2" fill="none"/></svg>
<div class="t" style="top:810.94px;font-size:12.78px;color:#212121;font-weight:bold;left:520.60px;letter-spacing:-0.349px;">Miscellaneous</div>
<div class="a" style="left:513px;top:834px;width:1389px;height:33px;background:#e4e5e7"></div>
<div class="a" style="left:513px;top:834px;width:1px;height:33px;background:#cfd0d2"></div>
<div class="a" style="left:549px;top:834px;width:1px;height:33px;background:#cfd0d2"></div>
<div class="a" style="left:634px;top:834px;width:1px;height:33px;background:#cfd0d2"></div>
<div class="a" style="left:727px;top:834px;width:1px;height:33px;background:#cfd0d2"></div>
<div class="a" style="left:907px;top:834px;width:1px;height:33px;background:#cfd0d2"></div>
<div class="a" style="left:1237px;top:834px;width:1px;height:33px;background:#cfd0d2"></div>
<div class="a" style="left:1351px;top:834px;width:1px;height:33px;background:#cfd0d2"></div>
<div class="a" style="left:1462px;top:834px;width:1px;height:33px;background:#cfd0d2"></div>
<div class="a" style="left:1574px;top:834px;width:1px;height:33px;background:#cfd0d2"></div>
<div class="a" style="left:1708px;top:834px;width:1px;height:33px;background:#cfd0d2"></div>
<div class="a" style="left:524px;top:842px;width:14px;height:14px;border:1.3px solid #8e8e8e;border-radius:3px;background:transparent"></div>
<div class="a" style="left:585.3px;top:840px;width:13.5px;height:13.5px;border:2px solid #687aa9;border-radius:2px;background:transparent"></div>
<div class="t" style="top:843.06px;font-size:12.8px;color:#212121;right:1198.00px;letter-spacing:0.078px;">1</div>
<div class="t" style="top:843.06px;font-size:12.8px;color:#212121;left:735.30px;letter-spacing:0.038px;">5948T53</div>
<div class="t" style="top:843.06px;font-size:12.8px;color:#212121;left:915.50px;letter-spacing:-0.123px;">Accident Prevention Illustrated Labels, Caution-No St…</div>
<div class="t" style="top:843.06px;font-size:12.8px;color:#212121;left:1246.00px;letter-spacing:-0.727px;">EA</div>
<div class="t" style="top:843.06px;font-size:12.8px;color:#8a8a8a;left:1359.50px;">-</div>
<div class="a" style="left:1512px;top:843px;width:14px;height:14px;border:1.5px solid #6e7ea6;border-radius:2.5px;background:transparent"></div>
<div class="t" style="top:843.06px;font-size:12.8px;color:#212121;right:216.40px;letter-spacing:0.190px;">$11.80</div>
<div class="t" style="top:843.06px;font-size:12.8px;color:#8a8a8a;left:1717.50px;">-</div>
<svg class="a" style="left:1815.5px;top:842px" width="15" height="14" viewBox="0 0 15 14"><path d="M0.5 13.5 L0.8 10.6 L9.6 1.8 L12.2 4.4 L3.4 13.2 Z" fill="#4b6bac"/><path d="M10.6 0.8 L11.4 0.1 Q12 -0.3 12.6 0.2 L13.8 1.4 Q14.3 2 13.8 2.6 L13.2 3.4 Z" fill="#4b6bac"/></svg>
<svg class="a" style="left:1850px;top:842px" width="11" height="14" viewBox="0 0 11 14"><path d="M3.7 0.3 H7.3 L7.9 1.2 H10.8 V2.6 H0.2 V1.2 H3.1 Z" fill="#e0282d"/><path d="M1 3.6 H10 V12.4 Q10 13.7 8.7 13.7 H2.3 Q1 13.7 1 12.4 Z" fill="#e0282d"/></svg>
<svg class="a" style="left:498.5px;top:880.67px" width="9" height="6" viewBox="0 0 9 6"><path d="M0.6 0.6 L4.5 4.8 L8.4 0.6" stroke="#7d7d7d" stroke-width="1.2" fill="none"/></svg>
<div class="t" style="top:877.57px;font-size:12.78px;color:#212121;font-weight:bold;left:520.60px;letter-spacing:-0.286px;">Motors</div>
<div class="a" style="left:513px;top:900px;width:1389px;height:33px;background:#e4e5e7"></div>
<div class="a" style="left:513px;top:900px;width:1px;height:33px;background:#cfd0d2"></div>
<div class="a" style="left:549px;top:900px;width:1px;height:33px;background:#cfd0d2"></div>
<div class="a" style="left:634px;top:900px;width:1px;height:33px;background:#cfd0d2"></div>
<div class="a" style="left:727px;top:900px;width:1px;height:33px;background:#cfd0d2"></div>
<div class="a" style="left:907px;top:900px;width:1px;height:33px;background:#cfd0d2"></div>
<div class="a" style="left:1237px;top:900px;width:1px;height:33px;background:#cfd0d2"></div>
<div class="a" style="left:1351px;top:900px;width:1px;height:33px;background:#cfd0d2"></div>
<div class="a" style="left:1462px;top:900px;width:1px;height:33px;background:#cfd0d2"></div>
<div class="a" style="left:1574px;top:900px;width:1px;height:33px;background:#cfd0d2"></div>
<div class="a" style="left:1708px;top:900px;width:1px;height:33px;background:#cfd0d2"></div>
<div class="a" style="left:524px;top:909px;width:14px;height:14px;border:1.3px solid #8e8e8e;border-radius:3px;background:transparent"></div>
<div class="a" style="left:585.3px;top:906px;width:13.5px;height:13.5px;border:2px solid #687aa9;border-radius:2px;background:transparent"></div>
<div class="t" style="top:909.69px;font-size:12.8px;color:#212121;right:1198.00px;letter-spacing:0.078px;">1</div>
<div class="t" style="top:909.69px;font-size:12.8px;color:#212121;left:735.30px;letter-spacing:-0.148px;">MPL-B230P-VJ74AA</div>
<div class="t" style="top:909.69px;font-size:12.8px;color:#212121;left:915.50px;letter-spacing:-0.082px;">AB MPL series servo motor - 480V -adsfkljhdsfhjkads…</div>
<div class="t" style="top:909.69px;font-size:12.8px;color:#212121;left:1246.00px;letter-spacing:-0.727px;">EA</div>
<div class="t" style="top:909.69px;font-size:12.8px;color:#212121;left:1359.20px;letter-spacing:-0.818px;">ALLEN BRADL…</div>
<svg class="a" style="left:1512px;top:909px" width="14" height="14" viewBox="0 0 14 14"><rect x="0" y="0" width="14" height="14" rx="2.5" fill="#4b6bac"/><path d="M3 7.2 L5.9 10 L11.2 4.2" stroke="#fff" stroke-width="1.7" fill="none"/></svg>
<div class="t" style="top:909.69px;font-size:12.8px;color:#212121;right:216.40px;letter-spacing:-0.076px;">$1,425.26</div>
<div class="t" style="top:909.69px;font-size:12.8px;color:#8a8a8a;left:1717.50px;">-</div>
<svg class="a" style="left:1815.5px;top:909px" width="15" height="14" viewBox="0 0 15 14"><path d="M0.5 13.5 L0.8 10.6 L9.6 1.8 L12.2 4.4 L3.4 13.2 Z" fill="#4b6bac"/><path d="M10.6 0.8 L11.4 0.1 Q12 -0.3 12.6 0.2 L13.8 1.4 Q14.3 2 13.8 2.6 L13.2 3.4 Z" fill="#4b6bac"/></svg>
<svg class="a" style="left:1850px;top:909px" width="11" height="14" viewBox="0 0 11 14"><path d="M3.7 0.3 H7.3 L7.9 1.2 H10.8 V2.6 H0.2 V1.2 H3.1 Z" fill="#e0282d"/><path d="M1 3.6 H10 V12.4 Q10 13.7 8.7 13.7 H2.3 Q1 13.7 1 12.4 Z" fill="#e0282d"/></svg>
<div class="a" style="left:513px;top:333px;width:1389px;height:1px;background:#cbccce"></div>
<div class="a" style="left:513px;top:365px;width:1389px;height:1px;background:#cbccce"></div>
<div class="a" style="left:513px;top:399px;width:1389px;height:1px;background:#dcdddf"></div>
<div class="a" style="left:513px;top:432px;width:1389px;height:1px;background:#cbccce"></div>
<div class="a" style="left:513px;top:465px;width:1389px;height:1px;background:#dcdddf"></div>
<div class="a" style="left:513px;top:499px;width:1389px;height:1px;background:#cbccce"></div>
<div class="a" style="left:493px;top:533px;width:1409px;height:1px;background:#dcdddf"></div>
<div class="a" style="left:513px;top:566px;width:1389px;height:1px;background:#cbccce"></div>
<div class="a" style="left:493px;top:600px;width:1409px;height:1px;background:#dcdddf"></div>
<div class="a" style="left:513px;top:633px;width:1389px;height:1px;background:#cbccce"></div>
<div class="a" style="left:513px;top:665px;width:1389px;height:1px;background:#cbccce"></div>
<div class="a" style="left:493px;top:700px;width:1409px;height:1px;background:#dcdddf"></div>
<div class="a" style="left:513px;top:733px;width:1389px;height:1px;background:#cbccce"></div>
<div class="a" style="left:513px;top:765px;width:1389px;height:1px;background:#cbccce"></div>
<div class="a" style="left:493px;top:800px;width:1409px;height:1px;background:#dcdddf"></div>
<div class="a" style="left:513px;top:833px;width:1389px;height:1px;background:#cbccce"></div>
<div class="a" style="left:493px;top:866px;width:1409px;height:1px;background:#dcdddf"></div>
<div class="a" style="left:513px;top:899px;width:1389px;height:1px;background:#cbccce"></div>
<div class="a" style="left:493px;top:932px;width:1409px;height:1px;background:#dcdddf"></div>
<div class="a" style="left:513px;top:933px;width:1px;height:43px;background:#e0e1e3;"></div>
<div class="a" style="left:586.5px;top:941.5px;width:13px;height:13px;border:1.3px solid #c4c4c4;border-radius:2.5px;background:transparent"></div>
<div class="t" style="top:940.00px;font-size:10.93px;color:#a3a3a3;left:647.50px;letter-spacing:-0.025px;">Quantity</div>
<div class="a" style="left:729px;top:933px;width:1px;height:30px;background:#9c9c9c;"></div>
<div class="t" style="top:944.40px;font-size:10.93px;color:#a3a3a3;left:740.70px;letter-spacing:0.011px;">Part Number</div>
<div class="a" style="left:908px;top:933px;width:1px;height:30px;background:#9c9c9c;"></div>
<div class="t" style="top:940.00px;font-size:10.93px;color:#a3a3a3;left:919.70px;letter-spacing:0.039px;">Part Description</div>
<svg class="a" style="left:1329.5px;top:946.5px" width="9" height="5" viewBox="0 0 9 5"><path d="M0 0 H9 L4.5 4.5 Z" fill="#8a8a8a"/></svg>
<div class="t" style="top:940.00px;font-size:10.93px;color:#a3a3a3;left:1363.50px;letter-spacing:0.109px;">Manufacturer</div>
<div class="a" style="left:1513px;top:941.5px;width:13.5px;height:13.5px;border:1.3px solid #bdbdbd;border-radius:2.5px;background:transparent"></div>
<div class="t" style="top:940.00px;font-size:10.93px;color:#a3a3a3;left:1586.20px;letter-spacing:0.017px;">Last Cost</div>
<div class="t" style="top:940.00px;font-size:10.93px;color:#a3a3a3;left:1720.80px;letter-spacing:-0.367px;">BOM Rev.</div>
<div class="a" style="left:1772px;top:933px;width:2px;height:28px;background:#e3e4e6;"></div>
<div class="a" style="left:550px;top:963px;width:1253px;height:1px;background:#9c9c9c;"></div>
<div class="a" style="left:1804px;top:933px;width:66px;height:29px;background:#4b6bac;border-radius:3px"></div>
<div class="t" style="top:942.00px;font-size:12.61px;color:#fff;font-weight:bold;left:1537.00px;width:600px;text-align:center;letter-spacing:-0.342px;">Add Item</div>
<div class="a" style="left:493px;top:976px;width:1409px;height:1px;background:#e0e1e3;"></div>
<div class="t" style="top:988.80px;font-size:12.67px;color:#212121;left:507.90px;letter-spacing:-0.148px;">Records: 13</div>
<svg class="a" style="left:599.5px;top:988.5px" width="9" height="14" viewBox="0 0 9 14"><path d="M1 5 L4.5 1.5 L8 5 M1 9 L4.5 12.5 L8 9" stroke="#4b6bac" stroke-width="1.5" fill="none"/></svg>
<svg class="a" style="left:1759px;top:989px" width="11" height="11" viewBox="0 0 11 11"><path d="M9.6 5.5 A4.1 4.1 0 1 1 8.2 2.4" stroke="#4f6498" stroke-width="1.25" fill="none"/><path d="M6.6 0.6 H10.2 V4.2 Z" fill="#4f6498"/></svg>
<svg class="a" style="left:1795px;top:988.5px" width="12" height="12" viewBox="0 0 12 12"><path d="M6 0.3 V7.2 M3.3 4.6 L6 7.3 L8.7 4.6 M0.8 6.8 V10.6 H11.2 V6.8" stroke="#4f6498" stroke-width="1.25" fill="none"/></svg>
<svg class="a" style="left:1830.5px;top:988.5px" width="12" height="12" viewBox="0 0 12 12"><rect x="0.7" y="0.7" width="4.1" height="4.1" stroke="#4f6498" stroke-width="1.25" fill="none"/><rect x="7.2" y="0.7" width="4.1" height="4.1" stroke="#4f6498" stroke-width="1.25" fill="none"/><rect x="0.7" y="7.2" width="4.1" height="4.1" stroke="#4f6498" stroke-width="1.25" fill="none"/><rect x="7.2" y="7.2" width="4.1" height="4.1" stroke="#4f6498" stroke-width="1.25" fill="none"/></svg>
<svg class="a" style="left:1866px;top:988px" width="13" height="13" viewBox="0 0 13 13"><path d="M5.3 0.7 H7.7 L8.1 2.3 L9.5 3.1 L11.1 2.6 L12.3 4.7 L11.1 5.9 V7.1 L12.3 8.3 L11.1 10.4 L9.5 9.9 L8.1 10.7 L7.7 12.3 H5.3 L4.9 10.7 L3.5 9.9 L1.9 10.4 L0.7 8.3 L1.9 7.1 V5.9 L0.7 4.7 L1.9 2.6 L3.5 3.1 L4.9 2.3 Z" stroke="#4f6498" stroke-width="1.15" fill="none" stroke-linejoin="round"/><path d="M6.5 4.6 L8.4 6.5 L6.5 8.4 L4.6 6.5 Z" stroke="#4f6498" stroke-width="1.15" fill="none"/></svg>
</body></html>
